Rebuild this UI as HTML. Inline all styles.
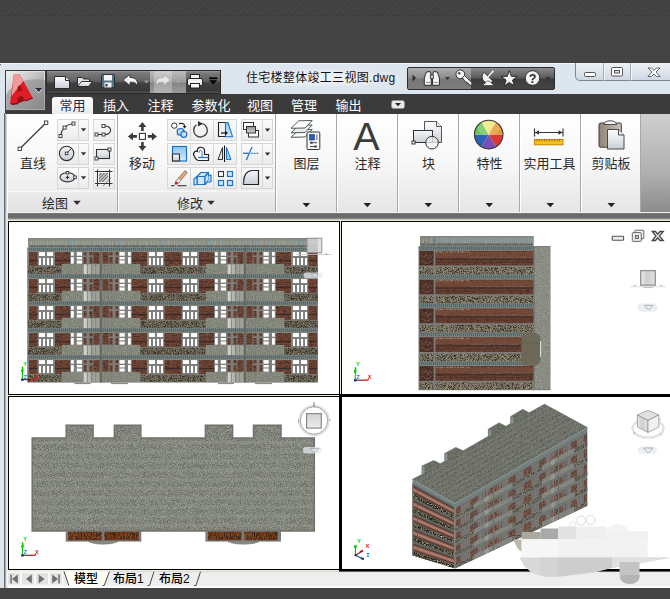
<!DOCTYPE html>
<html lang="zh-CN">
<head>
<meta charset="utf-8">
<title>住宅楼整体竣工三视图.dwg</title>
<style>
html,body{margin:0;padding:0;}
body{width:670px;height:599px;overflow:hidden;background:#444444;position:relative;
 font-family:"Liberation Sans","Noto Sans CJK SC",sans-serif;font-size:12px;color:#222;}
.abs{position:absolute;}
#topstrip{left:0;top:0;width:670px;height:16px;background:linear-gradient(rgba(0,0,0,0) 0,rgba(0,0,0,0) 15px,rgba(0,0,0,0.06) 15px),repeating-linear-gradient(135deg,#404040 0 2px,#444444 2px 4px);}
#win{left:0;top:63px;width:680px;height:525px;background:#dde5ee;border-top-left-radius:4px;}
#winhi{left:0;top:63px;width:670px;height:1px;background:#f4f7fa;}
/* title area */
#abtn{left:6px;top:70px;width:39px;height:41px;background:linear-gradient(135deg,#f0f0f0 0%,#bdbdbd 45%,#8e8e8e 100%);border:1px solid #555;box-sizing:border-box;}
#qat{left:46px;top:70px;width:175px;height:24px;background:linear-gradient(#9a9a9a 0,#7a7a7a 8%,#626262 45%,#404040 55%,#383838 88%,#505050 100%);border:1px solid #2a2a2a;box-sizing:border-box;}
#qatredo{left:150px;top:71px;width:36px;height:22px;background:linear-gradient(90deg,rgba(255,255,255,0) 0,rgba(255,255,255,0) 4px,rgba(255,255,255,0.25) 4px,rgba(255,255,255,0.25) 22px,rgba(255,255,255,0) 22px),linear-gradient(#bcbcbc,#9c9c9c 48%,#868686 55%,#9a9a9a);}
#title{left:240px;top:69px;width:166px;height:18px;line-height:18px;font-size:12px;color:#111;white-space:nowrap;letter-spacing:0.3px;padding-left:6px;box-sizing:border-box;background:radial-gradient(ellipse at center,rgba(255,255,255,0.55) 0%,rgba(255,255,255,0.3) 50%,rgba(255,255,255,0) 75%);}
#info{left:407px;top:67px;width:148px;height:23px;background:linear-gradient(90deg,rgba(255,255,255,0.30) 0,rgba(255,255,255,0.30) 63px,rgba(255,255,255,0) 63px),linear-gradient(#8a8a8a 0%,#5c5c5c 45%,#3c3c3c 55%,#454545 100%);border:1px solid #2c2c2c;box-sizing:border-box;border-radius:2px;}
#wctl{left:575px;top:63px;width:101px;height:18px;background:linear-gradient(#eef2f7,#cfd8e3);border:1px solid #7d8794;border-top:none;box-sizing:border-box;border-bottom-left-radius:5px;}
#tabrow{left:5px;top:94px;width:665px;height:20px;background:#3b3b3b;}
.tab{position:absolute;top:97px;height:17px;line-height:17px;font-size:13px;color:#fff;white-space:nowrap;}
#tabact{left:52px;top:97px;width:41px;height:17px;background:linear-gradient(#fdfdfd,#ececec);border-radius:3px 3px 0 0;}
/* ribbon */
#ribbon{left:5px;top:114px;width:665px;height:99px;background:linear-gradient(90deg,#d2d2d2 0,#d2d2d2 640px,#bcbcbc 665px);}
#ribgray{left:641px;top:114px;width:29px;height:98px;background:linear-gradient(#cfcfcf,#b0b0b0 60%,#8c8c8c);}
.panel{position:absolute;top:114px;height:98px;background:linear-gradient(#ffffff 0%,#f7f7f7 50%,#e6e6e6 100%);border-right:1px solid #a8a8a8;border-left:1px solid #fff;box-sizing:border-box;}
.ptitle{position:absolute;left:0;right:0;bottom:0;height:20px;background:linear-gradient(#ececec,#e2e2e2);border-top:1px solid #f8f8f8;}
.plabel{position:absolute;font-size:13px;color:#2a2a2a;white-space:nowrap;text-align:center;line-height:14px;}
.sb{position:absolute;height:22px;background:linear-gradient(#fbfbfb,#ededed);border:1px solid #dcdcdc;box-sizing:border-box;}
.dd{position:absolute;width:0;height:0;border-left:4px solid transparent;border-right:4px solid transparent;border-top:4px solid #333;}
.dds{position:absolute;width:0;height:0;border-left:3px solid transparent;border-right:3px solid transparent;border-top:3px solid #333;}
#band1{left:5px;top:212px;width:665px;height:8px;background:linear-gradient(#f0f0f0 0,#f0f0f0 1px,#7e7e7e 1px,#6c6c6c 2.5px,#6c6c6c 6px,#8a8a8a 6px,#8a8a8a 7px,#bdbdbd 7px,#bdbdbd 8px);}
#band2{left:5px;top:220px;width:665px;height:1px;background:#dcdacc;}
/* viewports */
#vparea{left:8px;top:220px;width:662px;height:351px;background:#f0eedd;}
.vpb{position:absolute;background:#fff;border:1px solid #000;box-sizing:border-box;}
.vp{position:absolute;background:#fff;}
#bottombar{left:5px;top:571px;width:665px;height:17px;background:linear-gradient(#eeeeee 0,#eeeeee 15px,#fbfbfb 15px);}
#below{left:0;top:588px;width:670px;height:11px;background:#444;}
#lframe{left:4px;top:113px;width:2px;height:475px;background:linear-gradient(90deg,#6b6b6b 0,#6b6b6b 1px,#a9a9a9 1px);}
#lframe2{left:6px;top:213px;width:2px;height:375px;background:#e6e6e6;}
.btab{position:absolute;top:572px;height:15px;line-height:15px;font-size:12px;color:#000;white-space:nowrap;font-family:"Liberation Sans","Noto Sans CJK SC",sans-serif;font-weight:500;}
</style>
</head>
<body>
<div class="abs" id="topstrip"></div>
<div class="abs" id="win"></div>
<div class="abs" id="winhi"></div>

<div class="abs" id="qat"></div>
<div class="abs" id="qatredo"></div>
<div class="abs" id="title">住宅楼整体竣工三视图.dwg</div>
<div class="abs" id="info"></div>
<div class="abs" id="wctl"></div>

<div class="abs" id="tabrow"></div>
<div class="abs" id="tabact"></div>
<div class="tab" style="left:59.500px;color:#1a2a55;">常用</div>
<div class="tab" style="left:103px;">插入</div>
<div class="tab" style="left:147.500px;">注释</div>
<div class="tab" style="left:191.500px;">参数化</div>
<div class="tab" style="left:247px;">视图</div>
<div class="tab" style="left:291px;">管理</div>
<div class="tab" style="left:335.500px;">输出</div>

<div class="abs" id="ribbon"></div>
<div class="abs" id="ribgray"></div>
<!-- PANELS -->
<div class="panel" id="p-draw" style="left:7px;width:111px;"><div class="ptitle"></div></div>
<div class="panel" id="p-mod" style="left:118px;width:158px;"><div class="ptitle"></div></div>
<div class="panel" id="p-layer" style="left:276px;width:61px;"></div>
<div class="panel" id="p-anno" style="left:337px;width:61px;"></div>
<div class="panel" id="p-block" style="left:398px;width:61px;"></div>
<div class="panel" id="p-prop" style="left:459px;width:61px;"></div>
<div class="panel" id="p-util" style="left:520px;width:61px;"></div>
<div class="panel" id="p-clip" style="left:581px;width:60px;"></div>

<div class="plabel" style="left:19px;top:157px;width:28px;">直线</div>
<div class="plabel" style="left:128px;top:157px;width:28px;">移动</div>
<div class="plabel" style="left:41px;top:197px;width:28px;">绘图</div>
<div class="plabel" style="left:176px;top:197px;width:28px;">修改</div>
<div class="plabel" style="left:276px;top:157px;width:61px;">图层</div>
<div class="plabel" style="left:337px;top:157px;width:61px;">注释</div>
<div class="plabel" style="left:398px;top:157px;width:61px;">块</div>
<div class="plabel" style="left:459px;top:157px;width:61px;">特性</div>
<div class="plabel" style="left:519px;top:157px;width:61px;">实用工具</div>
<div class="plabel" style="left:581px;top:157px;width:60px;">剪贴板</div>

<div class="abs" id="band1"></div>
<div class="abs" id="band2"></div>

<div class="abs" id="bottombar"></div>
<div class="abs" id="lframe"></div>
<div class="abs" id="lframe2"></div>
<div class="abs" id="below"></div>
<div class="abs" id="vparea"></div>
<div class="vpb" id="vp1" style="left:8px;top:221px;width:332px;height:174px;"></div>
<div class="vpb" id="vp2" style="left:341px;top:221px;width:335px;height:175px;"></div>
<div class="vpb" id="vp3" style="left:8px;top:396px;width:333px;height:174px;"></div>
<div class="vpb" id="vp4" style="left:339px;top:394px;width:340px;height:178px;border:3px solid #000;"></div>
<!--VPCONTENT-->
<svg class="abs" id="chrome" style="left:0;top:0;" width="670" height="599" viewBox="0 0 670 599">
<defs>
<linearGradient id="gw" x1="0" y1="0" x2="0" y2="1"><stop offset="0" stop-color="#ffffff"/><stop offset="1" stop-color="#c9ced6"/></linearGradient>
<linearGradient id="gA" x1="0" y1="0" x2="1" y2="1"><stop offset="0" stop-color="#f4f4f4"/><stop offset="0.45" stop-color="#c2c2c2"/><stop offset="1" stop-color="#808080"/></linearGradient>
</defs>
<!--GEN_VP1START--><defs><filter id="fstone" x="0" y="0" width="100%" height="100%" color-interpolation-filters="sRGB"><feTurbulence type="fractalNoise" baseFrequency="1.4" numOctaves="2" seed="3" result="n"/><feColorMatrix in="n" type="matrix" values="0 0 0 0 0  0 0 0 0 0  0 0 0 0 0  2.3 2.3 0 0 -2.0" result="a"/><feFlood flood-color="#2f2b22"/><feComposite in2="a" operator="in" result="d0"/><feComposite in="d0" in2="SourceAlpha" operator="in" result="dark"/><feColorMatrix in="n" type="matrix" values="0 0 0 0 0  0 0 0 0 0  0 0 0 0 0  0 -2.3 -2.3 0 1.72" result="b"/><feFlood flood-color="#b4ae98"/><feComposite in2="b" operator="in" result="l0"/><feComposite in="l0" in2="SourceAlpha" operator="in" result="light"/><feMerge><feMergeNode in="SourceGraphic"/><feMergeNode in="dark"/><feMergeNode in="light"/></feMerge></filter><filter id="fconc" x="0" y="0" width="100%" height="100%" color-interpolation-filters="sRGB"><feTurbulence type="fractalNoise" baseFrequency="1.2" numOctaves="2" seed="8" result="n"/><feColorMatrix in="n" type="matrix" values="1 0 0 0 0  1 0 0 0 0  1 0 0 0 0  0 0 0 0 1" result="g"/><feComposite in="SourceGraphic" in2="g" operator="arithmetic" k1="0" k2="1" k3="0.24" k4="-0.12" result="c"/><feComposite in="c" in2="SourceAlpha" operator="in"/></filter><filter id="fbrick" x="0" y="0" width="100%" height="100%" color-interpolation-filters="sRGB"><feTurbulence type="fractalNoise" baseFrequency="0.3 0.9" numOctaves="2" seed="11" result="n"/><feColorMatrix in="n" type="matrix" values="0 0 0 0 0  0 0 0 0 0  0 0 0 0 0  2.4 2.4 0 0 -2.25" result="a"/><feFlood flood-color="#46302a"/><feComposite in2="a" operator="in" result="d0"/><feComposite in="d0" in2="SourceAlpha" operator="in" result="dark"/><feColorMatrix in="n" type="matrix" values="0 0 0 0 0  0 0 0 0 0  0 0 0 0 0  0 -2.4 -2.4 0 1.78" result="b"/><feFlood flood-color="#8a6450"/><feComposite in2="b" operator="in" result="l0"/><feComposite in="l0" in2="SourceAlpha" operator="in" result="light"/><feMerge><feMergeNode in="SourceGraphic"/><feMergeNode in="dark"/><feMergeNode in="light"/></feMerge></filter><filter id="froof" x="0" y="0" width="100%" height="100%" color-interpolation-filters="sRGB"><feTurbulence type="fractalNoise" baseFrequency="1.3" numOctaves="2" seed="5" result="n"/><feColorMatrix in="n" type="matrix" values="1 0 0 0 0  1 0 0 0 0  1 0 0 0 0  0 0 0 0 1" result="g"/><feComposite in="SourceGraphic" in2="g" operator="arithmetic" k1="0" k2="1" k3="0.42" k4="-0.21" result="c"/><feComposite in="c" in2="SourceAlpha" operator="in"/></filter><filter id="froof2" x="0" y="0" width="100%" height="100%" color-interpolation-filters="sRGB"><feTurbulence type="fractalNoise" baseFrequency="1.2" numOctaves="2" seed="15" result="n"/><feColorMatrix in="n" type="matrix" values="1 0 0 0 0  1 0 0 0 0  1 0 0 0 0  0 0 0 0 1" result="g"/><feComposite in="SourceGraphic" in2="g" operator="arithmetic" k1="0" k2="1" k3="0.3" k4="-0.15" result="c"/><feComposite in="c" in2="SourceAlpha" operator="in"/></filter><filter id="fbrick2" x="0" y="0" width="100%" height="100%" color-interpolation-filters="sRGB"><feTurbulence type="fractalNoise" baseFrequency="0.9" numOctaves="2" seed="31" result="n"/><feColorMatrix in="n" type="matrix" values="0 0 0 0 0  0 0 0 0 0  0 0 0 0 0  2.8 2.8 0 0 -2.4" result="a"/><feFlood flood-color="#3a2a24"/><feComposite in2="a" operator="in" result="d0"/><feComposite in="d0" in2="SourceAlpha" operator="in" result="dark"/><feColorMatrix in="n" type="matrix" values="0 0 0 0 0  0 0 0 0 0  0 0 0 0 0  0 -2.8 -2.8 0 1.95" result="b"/><feFlood flood-color="#ad7c66"/><feComposite in2="b" operator="in" result="l0"/><feComposite in="l0" in2="SourceAlpha" operator="in" result="light"/><feMerge><feMergeNode in="SourceGraphic"/><feMergeNode in="dark"/><feMergeNode in="light"/></feMerge></filter><filter id="fstone2" x="0" y="0" width="100%" height="100%" color-interpolation-filters="sRGB"><feTurbulence type="fractalNoise" baseFrequency="1.1" numOctaves="2" seed="33" result="n"/><feColorMatrix in="n" type="matrix" values="0 0 0 0 0  0 0 0 0 0  0 0 0 0 0  2.8 2.8 0 0 -2.4" result="a"/><feFlood flood-color="#2f2b22"/><feComposite in2="a" operator="in" result="d0"/><feComposite in="d0" in2="SourceAlpha" operator="in" result="dark"/><feColorMatrix in="n" type="matrix" values="0 0 0 0 0  0 0 0 0 0  0 0 0 0 0  0 -2.8 -2.8 0 2.1" result="b"/><feFlood flood-color="#c8c2ac"/><feComposite in2="b" operator="in" result="l0"/><feComposite in="l0" in2="SourceAlpha" operator="in" result="light"/><feMerge><feMergeNode in="SourceGraphic"/><feMergeNode in="dark"/><feMergeNode in="light"/></feMerge></filter><filter id="fstone3" x="0" y="0" width="100%" height="100%" color-interpolation-filters="sRGB"><feTurbulence type="fractalNoise" baseFrequency="1.2 0.9" numOctaves="2" seed="35" result="n"/><feColorMatrix in="n" type="matrix" values="0 0 0 0 0  0 0 0 0 0  0 0 0 0 0  3.2 3.2 0 0 -2.6" result="a"/><feFlood flood-color="#1e1c18"/><feComposite in2="a" operator="in" result="d0"/><feComposite in="d0" in2="SourceAlpha" operator="in" result="dark"/><feColorMatrix in="n" type="matrix" values="0 0 0 0 0  0 0 0 0 0  0 0 0 0 0  0 -3.2 -3.2 0 2.35" result="b"/><feFlood flood-color="#efe9d6"/><feComposite in2="b" operator="in" result="l0"/><feComposite in="l0" in2="SourceAlpha" operator="in" result="light"/><feMerge><feMergeNode in="SourceGraphic"/><feMergeNode in="dark"/><feMergeNode in="light"/></feMerge></filter><filter id="fwood" x="0" y="0" width="100%" height="100%" color-interpolation-filters="sRGB"><feTurbulence type="fractalNoise" baseFrequency="1.1 0.3" numOctaves="2" seed="21" result="n"/><feColorMatrix in="n" type="matrix" values="0 0 0 0 0  0 0 0 0 0  0 0 0 0 0  2.6 2.6 0 0 -2.25" result="a"/><feFlood flood-color="#3a2214"/><feComposite in2="a" operator="in" result="d0"/><feComposite in="d0" in2="SourceAlpha" operator="in" result="dark"/><feColorMatrix in="n" type="matrix" values="0 0 0 0 0  0 0 0 0 0  0 0 0 0 0  0 -2.4 -2.4 0 1.75" result="b"/><feFlood flood-color="#9c5c2e"/><feComposite in2="b" operator="in" result="l0"/><feComposite in="l0" in2="SourceAlpha" operator="in" result="light"/><feMerge><feMergeNode in="SourceGraphic"/><feMergeNode in="dark"/><feMergeNode in="light"/></feMerge></filter><pattern id="pband" width="2" height="3.3" patternUnits="userSpaceOnUse"><rect width="2" height="3.3" fill="#5c635d"/><rect x="0" y="0.6" width="1" height="2.7" fill="#6f8385"/><rect y="0" width="2" height="0.6" fill="#6c6f6a"/></pattern>
<pattern id="pparapet" width="23" height="8" patternUnits="userSpaceOnUse"><rect width="23" height="8" fill="#8b8e83"/><rect x="1" y="1" width="0.9" height="6" fill="#8aa9ab"/><rect x="3.2" y="1" width="0.9" height="6" fill="#8aa9ab"/><rect x="5.4" y="1" width="0.9" height="6" fill="#90abab"/><rect x="7.6" y="1" width="1" height="6" fill="#aeaf9c"/><rect x="10.2" y="1" width="0.8" height="6" fill="#97a29c"/><rect x="13" y="1" width="1" height="6" fill="#a3a595"/><rect x="15.400" y="1" width="0.9" height="6" fill="#8aa9ab"/><rect x="17.600" y="1" width="0.9" height="6" fill="#8ea8a8"/><rect x="20" y="1" width="1" height="6" fill="#a0a292"/></pattern>
<pattern id="pparapet2" width="2.2" height="6" patternUnits="userSpaceOnUse"><rect width="2.2" height="6" fill="#868b84"/><rect x="0.3" width="0.8" height="6" fill="#8fa9aa"/></pattern>
</defs><g id="vp1c"><rect x="28.30" y="238.20" width="289.50" height="7.00" fill="url(#pparapet)"/><rect x="28.30" y="238.20" width="289.50" height="0.90" fill="#787a74"/><rect x="28.30" y="238.20" width="0.90" height="7.00" fill="#787a74"/><rect x="28.30" y="245.00" width="289.50" height="2.60" fill="#7c7d79"/><path d="M30 246.200 H316" stroke="#55554f" stroke-width="0.9" stroke-dasharray="5 1.500 2 1 7 2"/><rect x="27.20" y="247.40" width="290.80" height="135.20" fill="#7e7e7c"/><g fill="url(#pband)"><rect x="29.00" y="247.60" width="144.00" height="3.30"/><rect x="29.00" y="274.60" width="144.00" height="3.30"/><rect x="29.00" y="301.60" width="144.00" height="3.30"/><rect x="29.00" y="328.60" width="144.00" height="3.30"/><rect x="29.00" y="355.60" width="144.00" height="3.30"/><rect x="173.00" y="247.60" width="144.00" height="3.30"/><rect x="173.00" y="274.60" width="144.00" height="3.30"/><rect x="173.00" y="301.60" width="144.00" height="3.30"/><rect x="173.00" y="328.60" width="144.00" height="3.30"/><rect x="173.00" y="355.60" width="144.00" height="3.30"/></g><g fill="#85877a"><rect x="29.00" y="250.90" width="144.00" height="0.90"/><rect x="29.00" y="277.90" width="144.00" height="0.90"/><rect x="29.00" y="304.90" width="144.00" height="0.90"/><rect x="29.00" y="331.90" width="144.00" height="0.90"/><rect x="29.00" y="358.90" width="144.00" height="0.90"/><rect x="173.00" y="250.90" width="144.00" height="0.90"/><rect x="173.00" y="277.90" width="144.00" height="0.90"/><rect x="173.00" y="304.90" width="144.00" height="0.90"/><rect x="173.00" y="331.90" width="144.00" height="0.90"/><rect x="173.00" y="358.90" width="144.00" height="0.90"/></g><g fill="#6f4433" filter="url(#fbrick)"><rect x="29.00" y="252.10" width="8.50" height="13.80"/><rect x="55.00" y="252.10" width="15.00" height="13.80"/><rect x="93.50" y="252.10" width="6.00" height="11.50"/><rect x="89.50" y="252.10" width="3.00" height="3.20"/><rect x="89.50" y="257.10" width="3.00" height="6.50"/><rect x="83.70" y="252.10" width="2.80" height="3.20"/><rect x="83.70" y="257.10" width="2.80" height="6.50"/><rect x="164.50" y="252.10" width="8.50" height="13.80"/><rect x="132.00" y="252.10" width="15.00" height="13.80"/><rect x="102.50" y="252.10" width="6.00" height="11.50"/><rect x="109.50" y="252.10" width="3.00" height="3.20"/><rect x="109.50" y="257.10" width="3.00" height="6.50"/><rect x="115.50" y="252.10" width="2.80" height="3.20"/><rect x="115.50" y="257.10" width="2.80" height="6.50"/><rect x="29.00" y="279.10" width="8.50" height="13.80"/><rect x="55.00" y="279.10" width="15.00" height="13.80"/><rect x="93.50" y="279.10" width="6.00" height="11.50"/><rect x="89.50" y="279.10" width="3.00" height="3.20"/><rect x="89.50" y="284.10" width="3.00" height="6.50"/><rect x="83.70" y="279.10" width="2.80" height="3.20"/><rect x="83.70" y="284.10" width="2.80" height="6.50"/><rect x="164.50" y="279.10" width="8.50" height="13.80"/><rect x="132.00" y="279.10" width="15.00" height="13.80"/><rect x="102.50" y="279.10" width="6.00" height="11.50"/><rect x="109.50" y="279.10" width="3.00" height="3.20"/><rect x="109.50" y="284.10" width="3.00" height="6.50"/><rect x="115.50" y="279.10" width="2.80" height="3.20"/><rect x="115.50" y="284.10" width="2.80" height="6.50"/><rect x="29.00" y="306.10" width="8.50" height="13.80"/><rect x="55.00" y="306.10" width="15.00" height="13.80"/><rect x="93.50" y="306.10" width="6.00" height="11.50"/><rect x="89.50" y="306.10" width="3.00" height="3.20"/><rect x="89.50" y="311.10" width="3.00" height="6.50"/><rect x="83.70" y="306.10" width="2.80" height="3.20"/><rect x="83.70" y="311.10" width="2.80" height="6.50"/><rect x="164.50" y="306.10" width="8.50" height="13.80"/><rect x="132.00" y="306.10" width="15.00" height="13.80"/><rect x="102.50" y="306.10" width="6.00" height="11.50"/><rect x="109.50" y="306.10" width="3.00" height="3.20"/><rect x="109.50" y="311.10" width="3.00" height="6.50"/><rect x="115.50" y="306.10" width="2.80" height="3.20"/><rect x="115.50" y="311.10" width="2.80" height="6.50"/><rect x="29.00" y="333.10" width="8.50" height="13.80"/><rect x="55.00" y="333.10" width="15.00" height="13.80"/><rect x="93.50" y="333.10" width="6.00" height="11.50"/><rect x="89.50" y="333.10" width="3.00" height="3.20"/><rect x="89.50" y="338.10" width="3.00" height="6.50"/><rect x="83.70" y="333.10" width="2.80" height="3.20"/><rect x="83.70" y="338.10" width="2.80" height="6.50"/><rect x="164.50" y="333.10" width="8.50" height="13.80"/><rect x="132.00" y="333.10" width="15.00" height="13.80"/><rect x="102.50" y="333.10" width="6.00" height="11.50"/><rect x="109.50" y="333.10" width="3.00" height="3.20"/><rect x="109.50" y="338.10" width="3.00" height="6.50"/><rect x="115.50" y="333.10" width="2.80" height="3.20"/><rect x="115.50" y="338.10" width="2.80" height="6.50"/><rect x="29.00" y="360.10" width="8.50" height="13.80"/><rect x="55.00" y="360.10" width="15.00" height="13.80"/><rect x="93.50" y="360.10" width="6.00" height="11.50"/><rect x="89.50" y="360.10" width="3.00" height="3.20"/><rect x="89.50" y="365.10" width="3.00" height="6.50"/><rect x="83.70" y="360.10" width="2.80" height="3.20"/><rect x="83.70" y="365.10" width="2.80" height="6.50"/><rect x="164.50" y="360.10" width="8.50" height="13.80"/><rect x="132.00" y="360.10" width="15.00" height="13.80"/><rect x="102.50" y="360.10" width="6.00" height="11.50"/><rect x="109.50" y="360.10" width="3.00" height="3.20"/><rect x="109.50" y="365.10" width="3.00" height="6.50"/><rect x="115.50" y="360.10" width="2.80" height="3.20"/><rect x="115.50" y="365.10" width="2.80" height="6.50"/><rect x="173.00" y="252.10" width="8.50" height="13.80"/><rect x="199.00" y="252.10" width="15.00" height="13.80"/><rect x="237.50" y="252.10" width="6.00" height="11.50"/><rect x="233.50" y="252.10" width="3.00" height="3.20"/><rect x="233.50" y="257.10" width="3.00" height="6.50"/><rect x="227.70" y="252.10" width="2.80" height="3.20"/><rect x="227.70" y="257.10" width="2.80" height="6.50"/><rect x="308.50" y="252.10" width="8.50" height="13.80"/><rect x="276.00" y="252.10" width="15.00" height="13.80"/><rect x="246.50" y="252.10" width="6.00" height="11.50"/><rect x="253.50" y="252.10" width="3.00" height="3.20"/><rect x="253.50" y="257.10" width="3.00" height="6.50"/><rect x="259.50" y="252.10" width="2.80" height="3.20"/><rect x="259.50" y="257.10" width="2.80" height="6.50"/><rect x="173.00" y="279.10" width="8.50" height="13.80"/><rect x="199.00" y="279.10" width="15.00" height="13.80"/><rect x="237.50" y="279.10" width="6.00" height="11.50"/><rect x="233.50" y="279.10" width="3.00" height="3.20"/><rect x="233.50" y="284.10" width="3.00" height="6.50"/><rect x="227.70" y="279.10" width="2.80" height="3.20"/><rect x="227.70" y="284.10" width="2.80" height="6.50"/><rect x="308.50" y="279.10" width="8.50" height="13.80"/><rect x="276.00" y="279.10" width="15.00" height="13.80"/><rect x="246.50" y="279.10" width="6.00" height="11.50"/><rect x="253.50" y="279.10" width="3.00" height="3.20"/><rect x="253.50" y="284.10" width="3.00" height="6.50"/><rect x="259.50" y="279.10" width="2.80" height="3.20"/><rect x="259.50" y="284.10" width="2.80" height="6.50"/><rect x="173.00" y="306.10" width="8.50" height="13.80"/><rect x="199.00" y="306.10" width="15.00" height="13.80"/><rect x="237.50" y="306.10" width="6.00" height="11.50"/><rect x="233.50" y="306.10" width="3.00" height="3.20"/><rect x="233.50" y="311.10" width="3.00" height="6.50"/><rect x="227.70" y="306.10" width="2.80" height="3.20"/><rect x="227.70" y="311.10" width="2.80" height="6.50"/><rect x="308.50" y="306.10" width="8.50" height="13.80"/><rect x="276.00" y="306.10" width="15.00" height="13.80"/><rect x="246.50" y="306.10" width="6.00" height="11.50"/><rect x="253.50" y="306.10" width="3.00" height="3.20"/><rect x="253.50" y="311.10" width="3.00" height="6.50"/><rect x="259.50" y="306.10" width="2.80" height="3.20"/><rect x="259.50" y="311.10" width="2.80" height="6.50"/><rect x="173.00" y="333.10" width="8.50" height="13.80"/><rect x="199.00" y="333.10" width="15.00" height="13.80"/><rect x="237.50" y="333.10" width="6.00" height="11.50"/><rect x="233.50" y="333.10" width="3.00" height="3.20"/><rect x="233.50" y="338.10" width="3.00" height="6.50"/><rect x="227.70" y="333.10" width="2.80" height="3.20"/><rect x="227.70" y="338.10" width="2.80" height="6.50"/><rect x="308.50" y="333.10" width="8.50" height="13.80"/><rect x="276.00" y="333.10" width="15.00" height="13.80"/><rect x="246.50" y="333.10" width="6.00" height="11.50"/><rect x="253.50" y="333.10" width="3.00" height="3.20"/><rect x="253.50" y="338.10" width="3.00" height="6.50"/><rect x="259.50" y="333.10" width="2.80" height="3.20"/><rect x="259.50" y="338.10" width="2.80" height="6.50"/><rect x="173.00" y="360.10" width="8.50" height="13.80"/><rect x="199.00" y="360.10" width="15.00" height="13.80"/><rect x="237.50" y="360.10" width="6.00" height="11.50"/><rect x="233.50" y="360.10" width="3.00" height="3.20"/><rect x="233.50" y="365.10" width="3.00" height="6.50"/><rect x="227.70" y="360.10" width="2.80" height="3.20"/><rect x="227.70" y="365.10" width="2.80" height="6.50"/><rect x="308.50" y="360.10" width="8.50" height="13.80"/><rect x="276.00" y="360.10" width="15.00" height="13.80"/><rect x="246.50" y="360.10" width="6.00" height="11.50"/><rect x="253.50" y="360.10" width="3.00" height="3.20"/><rect x="253.50" y="365.10" width="3.00" height="6.50"/><rect x="259.50" y="360.10" width="2.80" height="3.20"/><rect x="259.50" y="365.10" width="2.80" height="6.50"/></g><g fill="#35292a" fill-opacity="0.9"><rect x="29.00" y="259.90" width="8.50" height="1.30"/><rect x="55.00" y="259.90" width="15.00" height="1.30"/><rect x="164.50" y="259.90" width="8.50" height="1.30"/><rect x="132.00" y="259.90" width="15.00" height="1.30"/><rect x="29.00" y="286.90" width="8.50" height="1.30"/><rect x="55.00" y="286.90" width="15.00" height="1.30"/><rect x="164.50" y="286.90" width="8.50" height="1.30"/><rect x="132.00" y="286.90" width="15.00" height="1.30"/><rect x="29.00" y="313.90" width="8.50" height="1.30"/><rect x="55.00" y="313.90" width="15.00" height="1.30"/><rect x="164.50" y="313.90" width="8.50" height="1.30"/><rect x="132.00" y="313.90" width="15.00" height="1.30"/><rect x="29.00" y="340.90" width="8.50" height="1.30"/><rect x="55.00" y="340.90" width="15.00" height="1.30"/><rect x="164.50" y="340.90" width="8.50" height="1.30"/><rect x="132.00" y="340.90" width="15.00" height="1.30"/><rect x="29.00" y="367.90" width="8.50" height="1.30"/><rect x="55.00" y="367.90" width="15.00" height="1.30"/><rect x="164.50" y="367.90" width="8.50" height="1.30"/><rect x="132.00" y="367.90" width="15.00" height="1.30"/><rect x="173.00" y="259.90" width="8.50" height="1.30"/><rect x="199.00" y="259.90" width="15.00" height="1.30"/><rect x="308.50" y="259.90" width="8.50" height="1.30"/><rect x="276.00" y="259.90" width="15.00" height="1.30"/><rect x="173.00" y="286.90" width="8.50" height="1.30"/><rect x="199.00" y="286.90" width="15.00" height="1.30"/><rect x="308.50" y="286.90" width="8.50" height="1.30"/><rect x="276.00" y="286.90" width="15.00" height="1.30"/><rect x="173.00" y="313.90" width="8.50" height="1.30"/><rect x="199.00" y="313.90" width="15.00" height="1.30"/><rect x="308.50" y="313.90" width="8.50" height="1.30"/><rect x="276.00" y="313.90" width="15.00" height="1.30"/><rect x="173.00" y="340.90" width="8.50" height="1.30"/><rect x="199.00" y="340.90" width="15.00" height="1.30"/><rect x="308.50" y="340.90" width="8.50" height="1.30"/><rect x="276.00" y="340.90" width="15.00" height="1.30"/><rect x="173.00" y="367.90" width="8.50" height="1.30"/><rect x="199.00" y="367.90" width="15.00" height="1.30"/><rect x="308.50" y="367.90" width="8.50" height="1.30"/><rect x="276.00" y="367.90" width="15.00" height="1.30"/></g><g fill="#777160" filter="url(#fstone)"><rect x="28.00" y="266.70" width="33.50" height="7.10"/><rect x="140.50" y="266.70" width="32.50" height="7.10"/><rect x="28.00" y="293.70" width="33.50" height="7.10"/><rect x="140.50" y="293.70" width="32.50" height="7.10"/><rect x="28.00" y="320.70" width="33.50" height="7.10"/><rect x="140.50" y="320.70" width="32.50" height="7.10"/><rect x="28.00" y="347.70" width="33.50" height="7.10"/><rect x="140.50" y="347.70" width="32.50" height="7.10"/><rect x="28.00" y="374.70" width="33.50" height="7.10"/><rect x="140.50" y="374.70" width="32.50" height="7.10"/><rect x="173.00" y="266.70" width="32.50" height="7.10"/><rect x="284.50" y="266.70" width="33.30" height="7.10"/><rect x="173.00" y="293.70" width="32.50" height="7.10"/><rect x="284.50" y="293.70" width="33.30" height="7.10"/><rect x="173.00" y="320.70" width="32.50" height="7.10"/><rect x="284.50" y="320.70" width="33.30" height="7.10"/><rect x="173.00" y="347.70" width="32.50" height="7.10"/><rect x="284.50" y="347.70" width="33.30" height="7.10"/><rect x="173.00" y="374.70" width="32.50" height="7.10"/><rect x="284.50" y="374.70" width="33.30" height="7.10"/></g><g fill="#84887c" filter="url(#fconc)"><rect x="61.50" y="263.60" width="38.70" height="10.50"/><rect x="101.80" y="263.60" width="38.70" height="10.50"/><rect x="61.50" y="290.60" width="38.70" height="10.50"/><rect x="101.80" y="290.60" width="38.70" height="10.50"/><rect x="61.50" y="317.60" width="38.70" height="10.50"/><rect x="101.80" y="317.60" width="38.70" height="10.50"/><rect x="61.50" y="344.60" width="38.70" height="10.50"/><rect x="101.80" y="344.60" width="38.70" height="10.50"/><rect x="61.50" y="371.60" width="38.70" height="10.50"/><rect x="101.80" y="371.60" width="38.70" height="10.50"/><rect x="205.50" y="263.60" width="38.70" height="10.50"/><rect x="245.80" y="263.60" width="38.70" height="10.50"/><rect x="205.50" y="290.60" width="38.70" height="10.50"/><rect x="245.80" y="290.60" width="38.70" height="10.50"/><rect x="205.50" y="317.60" width="38.70" height="10.50"/><rect x="245.80" y="317.60" width="38.70" height="10.50"/><rect x="205.50" y="344.60" width="38.70" height="10.50"/><rect x="245.80" y="344.60" width="38.70" height="10.50"/><rect x="205.50" y="371.60" width="38.70" height="10.50"/><rect x="245.80" y="371.60" width="38.70" height="10.50"/></g><g fill="#fff"><rect x="38.90" y="252.10" width="6.10" height="3.90"/><rect x="47.00" y="252.10" width="6.10" height="3.90"/><rect x="38.90" y="258.00" width="2.10" height="7.00"/><rect x="43.00" y="258.00" width="2.10" height="7.00"/><rect x="47.00" y="258.00" width="2.10" height="7.00"/><rect x="51.00" y="258.00" width="2.10" height="7.00"/><rect x="71.00" y="252.10" width="2.80" height="3.60"/><rect x="71.00" y="257.10" width="2.80" height="6.60"/><rect x="76.80" y="252.10" width="5.20" height="3.60"/><rect x="76.80" y="257.00" width="5.20" height="2.40"/><rect x="76.80" y="260.50" width="5.20" height="3.10"/><rect x="148.90" y="252.10" width="6.10" height="3.90"/><rect x="157.00" y="252.10" width="6.10" height="3.90"/><rect x="148.90" y="258.00" width="2.10" height="7.00"/><rect x="153.00" y="258.00" width="2.10" height="7.00"/><rect x="157.00" y="258.00" width="2.10" height="7.00"/><rect x="161.00" y="258.00" width="2.10" height="7.00"/><rect x="128.00" y="252.10" width="2.80" height="3.60"/><rect x="128.00" y="257.10" width="2.80" height="6.60"/><rect x="119.50" y="252.10" width="5.20" height="3.60"/><rect x="119.50" y="257.00" width="5.20" height="2.40"/><rect x="119.50" y="260.50" width="5.20" height="3.10"/><rect x="38.90" y="279.10" width="6.10" height="3.90"/><rect x="47.00" y="279.10" width="6.10" height="3.90"/><rect x="38.90" y="285.00" width="2.10" height="7.00"/><rect x="43.00" y="285.00" width="2.10" height="7.00"/><rect x="47.00" y="285.00" width="2.10" height="7.00"/><rect x="51.00" y="285.00" width="2.10" height="7.00"/><rect x="71.00" y="279.10" width="2.80" height="3.60"/><rect x="71.00" y="284.10" width="2.80" height="6.60"/><rect x="76.80" y="279.10" width="5.20" height="3.60"/><rect x="76.80" y="284.00" width="5.20" height="2.40"/><rect x="76.80" y="287.50" width="5.20" height="3.10"/><rect x="148.90" y="279.10" width="6.10" height="3.90"/><rect x="157.00" y="279.10" width="6.10" height="3.90"/><rect x="148.90" y="285.00" width="2.10" height="7.00"/><rect x="153.00" y="285.00" width="2.10" height="7.00"/><rect x="157.00" y="285.00" width="2.10" height="7.00"/><rect x="161.00" y="285.00" width="2.10" height="7.00"/><rect x="128.00" y="279.10" width="2.80" height="3.60"/><rect x="128.00" y="284.10" width="2.80" height="6.60"/><rect x="119.50" y="279.10" width="5.20" height="3.60"/><rect x="119.50" y="284.00" width="5.20" height="2.40"/><rect x="119.50" y="287.50" width="5.20" height="3.10"/><rect x="38.90" y="306.10" width="6.10" height="3.90"/><rect x="47.00" y="306.10" width="6.10" height="3.90"/><rect x="38.90" y="312.00" width="2.10" height="7.00"/><rect x="43.00" y="312.00" width="2.10" height="7.00"/><rect x="47.00" y="312.00" width="2.10" height="7.00"/><rect x="51.00" y="312.00" width="2.10" height="7.00"/><rect x="71.00" y="306.10" width="2.80" height="3.60"/><rect x="71.00" y="311.10" width="2.80" height="6.60"/><rect x="76.80" y="306.10" width="5.20" height="3.60"/><rect x="76.80" y="311.00" width="5.20" height="2.40"/><rect x="76.80" y="314.50" width="5.20" height="3.10"/><rect x="148.90" y="306.10" width="6.10" height="3.90"/><rect x="157.00" y="306.10" width="6.10" height="3.90"/><rect x="148.90" y="312.00" width="2.10" height="7.00"/><rect x="153.00" y="312.00" width="2.10" height="7.00"/><rect x="157.00" y="312.00" width="2.10" height="7.00"/><rect x="161.00" y="312.00" width="2.10" height="7.00"/><rect x="128.00" y="306.10" width="2.80" height="3.60"/><rect x="128.00" y="311.10" width="2.80" height="6.60"/><rect x="119.50" y="306.10" width="5.20" height="3.60"/><rect x="119.50" y="311.00" width="5.20" height="2.40"/><rect x="119.50" y="314.50" width="5.20" height="3.10"/><rect x="38.90" y="333.10" width="6.10" height="3.90"/><rect x="47.00" y="333.10" width="6.10" height="3.90"/><rect x="38.90" y="339.00" width="2.10" height="7.00"/><rect x="43.00" y="339.00" width="2.10" height="7.00"/><rect x="47.00" y="339.00" width="2.10" height="7.00"/><rect x="51.00" y="339.00" width="2.10" height="7.00"/><rect x="71.00" y="333.10" width="2.80" height="3.60"/><rect x="71.00" y="338.10" width="2.80" height="6.60"/><rect x="76.80" y="333.10" width="5.20" height="3.60"/><rect x="76.80" y="338.00" width="5.20" height="2.40"/><rect x="76.80" y="341.50" width="5.20" height="3.10"/><rect x="148.90" y="333.10" width="6.10" height="3.90"/><rect x="157.00" y="333.10" width="6.10" height="3.90"/><rect x="148.90" y="339.00" width="2.10" height="7.00"/><rect x="153.00" y="339.00" width="2.10" height="7.00"/><rect x="157.00" y="339.00" width="2.10" height="7.00"/><rect x="161.00" y="339.00" width="2.10" height="7.00"/><rect x="128.00" y="333.10" width="2.80" height="3.60"/><rect x="128.00" y="338.10" width="2.80" height="6.60"/><rect x="119.50" y="333.10" width="5.20" height="3.60"/><rect x="119.50" y="338.00" width="5.20" height="2.40"/><rect x="119.50" y="341.50" width="5.20" height="3.10"/><rect x="38.90" y="360.10" width="6.10" height="3.90"/><rect x="47.00" y="360.10" width="6.10" height="3.90"/><rect x="38.90" y="366.00" width="2.10" height="7.00"/><rect x="43.00" y="366.00" width="2.10" height="7.00"/><rect x="47.00" y="366.00" width="2.10" height="7.00"/><rect x="51.00" y="366.00" width="2.10" height="7.00"/><rect x="71.00" y="360.10" width="2.80" height="3.60"/><rect x="71.00" y="365.10" width="2.80" height="6.60"/><rect x="76.80" y="360.10" width="5.20" height="3.60"/><rect x="76.80" y="365.00" width="5.20" height="2.40"/><rect x="76.80" y="368.50" width="5.20" height="3.10"/><rect x="148.90" y="360.10" width="6.10" height="3.90"/><rect x="157.00" y="360.10" width="6.10" height="3.90"/><rect x="148.90" y="366.00" width="2.10" height="7.00"/><rect x="153.00" y="366.00" width="2.10" height="7.00"/><rect x="157.00" y="366.00" width="2.10" height="7.00"/><rect x="161.00" y="366.00" width="2.10" height="7.00"/><rect x="128.00" y="360.10" width="2.80" height="3.60"/><rect x="128.00" y="365.10" width="2.80" height="6.60"/><rect x="119.50" y="360.10" width="5.20" height="3.60"/><rect x="119.50" y="365.00" width="5.20" height="2.40"/><rect x="119.50" y="368.50" width="5.20" height="3.10"/><rect x="182.90" y="252.10" width="6.10" height="3.90"/><rect x="191.00" y="252.10" width="6.10" height="3.90"/><rect x="182.90" y="258.00" width="2.10" height="7.00"/><rect x="187.00" y="258.00" width="2.10" height="7.00"/><rect x="191.00" y="258.00" width="2.10" height="7.00"/><rect x="195.00" y="258.00" width="2.10" height="7.00"/><rect x="215.00" y="252.10" width="2.80" height="3.60"/><rect x="215.00" y="257.10" width="2.80" height="6.60"/><rect x="220.80" y="252.10" width="5.20" height="3.60"/><rect x="220.80" y="257.00" width="5.20" height="2.40"/><rect x="220.80" y="260.50" width="5.20" height="3.10"/><rect x="292.90" y="252.10" width="6.10" height="3.90"/><rect x="301.00" y="252.10" width="6.10" height="3.90"/><rect x="292.90" y="258.00" width="2.10" height="7.00"/><rect x="297.00" y="258.00" width="2.10" height="7.00"/><rect x="301.00" y="258.00" width="2.10" height="7.00"/><rect x="305.00" y="258.00" width="2.10" height="7.00"/><rect x="272.00" y="252.10" width="2.80" height="3.60"/><rect x="272.00" y="257.10" width="2.80" height="6.60"/><rect x="263.50" y="252.10" width="5.20" height="3.60"/><rect x="263.50" y="257.00" width="5.20" height="2.40"/><rect x="263.50" y="260.50" width="5.20" height="3.10"/><rect x="182.90" y="279.10" width="6.10" height="3.90"/><rect x="191.00" y="279.10" width="6.10" height="3.90"/><rect x="182.90" y="285.00" width="2.10" height="7.00"/><rect x="187.00" y="285.00" width="2.10" height="7.00"/><rect x="191.00" y="285.00" width="2.10" height="7.00"/><rect x="195.00" y="285.00" width="2.10" height="7.00"/><rect x="215.00" y="279.10" width="2.80" height="3.60"/><rect x="215.00" y="284.10" width="2.80" height="6.60"/><rect x="220.80" y="279.10" width="5.20" height="3.60"/><rect x="220.80" y="284.00" width="5.20" height="2.40"/><rect x="220.80" y="287.50" width="5.20" height="3.10"/><rect x="292.90" y="279.10" width="6.10" height="3.90"/><rect x="301.00" y="279.10" width="6.10" height="3.90"/><rect x="292.90" y="285.00" width="2.10" height="7.00"/><rect x="297.00" y="285.00" width="2.10" height="7.00"/><rect x="301.00" y="285.00" width="2.10" height="7.00"/><rect x="305.00" y="285.00" width="2.10" height="7.00"/><rect x="272.00" y="279.10" width="2.80" height="3.60"/><rect x="272.00" y="284.10" width="2.80" height="6.60"/><rect x="263.50" y="279.10" width="5.20" height="3.60"/><rect x="263.50" y="284.00" width="5.20" height="2.40"/><rect x="263.50" y="287.50" width="5.20" height="3.10"/><rect x="182.90" y="306.10" width="6.10" height="3.90"/><rect x="191.00" y="306.10" width="6.10" height="3.90"/><rect x="182.90" y="312.00" width="2.10" height="7.00"/><rect x="187.00" y="312.00" width="2.10" height="7.00"/><rect x="191.00" y="312.00" width="2.10" height="7.00"/><rect x="195.00" y="312.00" width="2.10" height="7.00"/><rect x="215.00" y="306.10" width="2.80" height="3.60"/><rect x="215.00" y="311.10" width="2.80" height="6.60"/><rect x="220.80" y="306.10" width="5.20" height="3.60"/><rect x="220.80" y="311.00" width="5.20" height="2.40"/><rect x="220.80" y="314.50" width="5.20" height="3.10"/><rect x="292.90" y="306.10" width="6.10" height="3.90"/><rect x="301.00" y="306.10" width="6.10" height="3.90"/><rect x="292.90" y="312.00" width="2.10" height="7.00"/><rect x="297.00" y="312.00" width="2.10" height="7.00"/><rect x="301.00" y="312.00" width="2.10" height="7.00"/><rect x="305.00" y="312.00" width="2.10" height="7.00"/><rect x="272.00" y="306.10" width="2.80" height="3.60"/><rect x="272.00" y="311.10" width="2.80" height="6.60"/><rect x="263.50" y="306.10" width="5.20" height="3.60"/><rect x="263.50" y="311.00" width="5.20" height="2.40"/><rect x="263.50" y="314.50" width="5.20" height="3.10"/><rect x="182.90" y="333.10" width="6.10" height="3.90"/><rect x="191.00" y="333.10" width="6.10" height="3.90"/><rect x="182.90" y="339.00" width="2.10" height="7.00"/><rect x="187.00" y="339.00" width="2.10" height="7.00"/><rect x="191.00" y="339.00" width="2.10" height="7.00"/><rect x="195.00" y="339.00" width="2.10" height="7.00"/><rect x="215.00" y="333.10" width="2.80" height="3.60"/><rect x="215.00" y="338.10" width="2.80" height="6.60"/><rect x="220.80" y="333.10" width="5.20" height="3.60"/><rect x="220.80" y="338.00" width="5.20" height="2.40"/><rect x="220.80" y="341.50" width="5.20" height="3.10"/><rect x="292.90" y="333.10" width="6.10" height="3.90"/><rect x="301.00" y="333.10" width="6.10" height="3.90"/><rect x="292.90" y="339.00" width="2.10" height="7.00"/><rect x="297.00" y="339.00" width="2.10" height="7.00"/><rect x="301.00" y="339.00" width="2.10" height="7.00"/><rect x="305.00" y="339.00" width="2.10" height="7.00"/><rect x="272.00" y="333.10" width="2.80" height="3.60"/><rect x="272.00" y="338.10" width="2.80" height="6.60"/><rect x="263.50" y="333.10" width="5.20" height="3.60"/><rect x="263.50" y="338.00" width="5.20" height="2.40"/><rect x="263.50" y="341.50" width="5.20" height="3.10"/><rect x="182.90" y="360.10" width="6.10" height="3.90"/><rect x="191.00" y="360.10" width="6.10" height="3.90"/><rect x="182.90" y="366.00" width="2.10" height="7.00"/><rect x="187.00" y="366.00" width="2.10" height="7.00"/><rect x="191.00" y="366.00" width="2.10" height="7.00"/><rect x="195.00" y="366.00" width="2.10" height="7.00"/><rect x="215.00" y="360.10" width="2.80" height="3.60"/><rect x="215.00" y="365.10" width="2.80" height="6.60"/><rect x="220.80" y="360.10" width="5.20" height="3.60"/><rect x="220.80" y="365.00" width="5.20" height="2.40"/><rect x="220.80" y="368.50" width="5.20" height="3.10"/><rect x="292.90" y="360.10" width="6.10" height="3.90"/><rect x="301.00" y="360.10" width="6.10" height="3.90"/><rect x="292.90" y="366.00" width="2.10" height="7.00"/><rect x="297.00" y="366.00" width="2.10" height="7.00"/><rect x="301.00" y="366.00" width="2.10" height="7.00"/><rect x="305.00" y="366.00" width="2.10" height="7.00"/><rect x="272.00" y="360.10" width="2.80" height="3.60"/><rect x="272.00" y="365.10" width="2.80" height="6.60"/><rect x="263.50" y="360.10" width="5.20" height="3.60"/><rect x="263.50" y="365.00" width="5.20" height="2.40"/><rect x="263.50" y="368.50" width="5.20" height="3.10"/></g><g fill="#cfd0cb"><rect x="83.70" y="264.40" width="3.10" height="9.70"/><rect x="83.70" y="291.40" width="3.10" height="9.70"/><rect x="83.70" y="318.40" width="3.10" height="9.70"/><rect x="83.70" y="345.40" width="3.10" height="9.70"/><rect x="83.70" y="372.40" width="3.10" height="9.70"/><rect x="227.70" y="264.40" width="3.10" height="9.70"/><rect x="227.70" y="291.40" width="3.10" height="9.70"/><rect x="227.70" y="318.40" width="3.10" height="9.70"/><rect x="227.70" y="345.40" width="3.10" height="9.70"/><rect x="227.70" y="372.40" width="3.10" height="9.70"/></g><g fill="#b4b7b0"><rect x="87.80" y="264.40" width="3.10" height="9.70"/><rect x="87.80" y="291.40" width="3.10" height="9.70"/><rect x="87.80" y="318.40" width="3.10" height="9.70"/><rect x="87.80" y="345.40" width="3.10" height="9.70"/><rect x="87.80" y="372.40" width="3.10" height="9.70"/><rect x="231.80" y="264.40" width="3.10" height="9.70"/><rect x="231.80" y="291.40" width="3.10" height="9.70"/><rect x="231.80" y="318.40" width="3.10" height="9.70"/><rect x="231.80" y="345.40" width="3.10" height="9.70"/><rect x="231.80" y="372.40" width="3.10" height="9.70"/></g><g fill="#9fa29a"><rect x="92.40" y="264.40" width="2.80" height="9.70"/><rect x="96.20" y="264.40" width="3.00" height="9.70"/><rect x="92.40" y="291.40" width="2.80" height="9.70"/><rect x="96.20" y="291.40" width="3.00" height="9.70"/><rect x="92.40" y="318.40" width="2.80" height="9.70"/><rect x="96.20" y="318.40" width="3.00" height="9.70"/><rect x="92.40" y="345.40" width="2.80" height="9.70"/><rect x="96.20" y="345.40" width="3.00" height="9.70"/><rect x="92.40" y="372.40" width="2.80" height="9.70"/><rect x="96.20" y="372.40" width="3.00" height="9.70"/><rect x="236.40" y="264.40" width="2.80" height="9.70"/><rect x="240.20" y="264.40" width="3.00" height="9.70"/><rect x="236.40" y="291.40" width="2.80" height="9.70"/><rect x="240.20" y="291.40" width="3.00" height="9.70"/><rect x="236.40" y="318.40" width="2.80" height="9.70"/><rect x="240.20" y="318.40" width="3.00" height="9.70"/><rect x="236.40" y="345.40" width="2.80" height="9.70"/><rect x="240.20" y="345.40" width="3.00" height="9.70"/><rect x="236.40" y="372.40" width="2.80" height="9.70"/><rect x="240.20" y="372.40" width="3.00" height="9.70"/></g><g fill="#747870" fill-opacity="0.6"><rect x="104.00" y="264.40" width="0.80" height="9.70"/><rect x="107.50" y="264.40" width="0.80" height="9.70"/><rect x="111.00" y="264.40" width="0.80" height="9.70"/><rect x="104.00" y="291.40" width="0.80" height="9.70"/><rect x="107.50" y="291.40" width="0.80" height="9.70"/><rect x="111.00" y="291.40" width="0.80" height="9.70"/><rect x="104.00" y="318.40" width="0.80" height="9.70"/><rect x="107.50" y="318.40" width="0.80" height="9.70"/><rect x="111.00" y="318.40" width="0.80" height="9.70"/><rect x="104.00" y="345.40" width="0.80" height="9.70"/><rect x="107.50" y="345.40" width="0.80" height="9.70"/><rect x="111.00" y="345.40" width="0.80" height="9.70"/><rect x="104.00" y="372.40" width="0.80" height="9.70"/><rect x="107.50" y="372.40" width="0.80" height="9.70"/><rect x="111.00" y="372.40" width="0.80" height="9.70"/><rect x="248.00" y="264.40" width="0.80" height="9.70"/><rect x="251.50" y="264.40" width="0.80" height="9.70"/><rect x="255.00" y="264.40" width="0.80" height="9.70"/><rect x="248.00" y="291.40" width="0.80" height="9.70"/><rect x="251.50" y="291.40" width="0.80" height="9.70"/><rect x="255.00" y="291.40" width="0.80" height="9.70"/><rect x="248.00" y="318.40" width="0.80" height="9.70"/><rect x="251.50" y="318.40" width="0.80" height="9.70"/><rect x="255.00" y="318.40" width="0.80" height="9.70"/><rect x="248.00" y="345.40" width="0.80" height="9.70"/><rect x="251.50" y="345.40" width="0.80" height="9.70"/><rect x="255.00" y="345.40" width="0.80" height="9.70"/><rect x="248.00" y="372.40" width="0.80" height="9.70"/><rect x="251.50" y="372.40" width="0.80" height="9.70"/><rect x="255.00" y="372.40" width="0.80" height="9.70"/></g><g fill="#5e5e5e"><rect x="100.40" y="247.60" width="1.20" height="27.00"/><rect x="100.40" y="274.60" width="1.20" height="27.00"/><rect x="100.40" y="301.60" width="1.20" height="27.00"/><rect x="100.40" y="328.60" width="1.20" height="27.00"/><rect x="100.40" y="355.60" width="1.20" height="27.00"/><rect x="244.40" y="247.60" width="1.20" height="27.00"/><rect x="244.40" y="274.60" width="1.20" height="27.00"/><rect x="244.40" y="301.60" width="1.20" height="27.00"/><rect x="244.40" y="328.60" width="1.20" height="27.00"/><rect x="244.40" y="355.60" width="1.20" height="27.00"/></g><rect x="74.50" y="382.60" width="16.00" height="1.50" fill="#8c8c88"/><rect x="111.00" y="382.60" width="17.00" height="1.50" fill="#8c8c88"/><rect x="218.00" y="382.60" width="16.00" height="1.50" fill="#8c8c88"/><rect x="255.00" y="382.60" width="17.00" height="1.50" fill="#8c8c88"/></g><!--GEN_VP1END-->
<!--GEN_VP2START--><g id="vp2c"><g filter="url(#froof)"><rect x="420.00" y="236.30" width="113.60" height="6.80" fill="#8b8e83"/></g><rect x="435.50" y="237.20" width="98.00" height="5.20" fill="url(#pparapet2)"/><rect x="420.00" y="236.30" width="113.60" height="0.90" fill="#787a74"/><rect x="434.00" y="236.30" width="1.30" height="7.00" fill="#787a74"/><rect x="420.00" y="243.00" width="113.60" height="3.20" fill="#7c7d79"/><path d="M421 244.500 H533" stroke="#5a5a54" stroke-width="0.9" stroke-dasharray="4 1.500 2 1 6 2"/><rect x="418.50" y="246.00" width="132.00" height="144.20" fill="#7e7e7c"/><g fill="url(#pband)"><rect x="419.50" y="246.30" width="114.00" height="3.60"/><rect x="419.50" y="275.15" width="114.00" height="3.60"/><rect x="419.50" y="304.00" width="114.00" height="3.60"/><rect x="419.50" y="332.85" width="114.00" height="3.60"/><rect x="419.50" y="361.70" width="114.00" height="3.60"/></g><g fill="#6b4133" filter="url(#fbrick)"><rect x="419.50" y="250.70" width="14.00" height="14.70"/><rect x="435.50" y="250.70" width="97.80" height="14.70"/><rect x="419.50" y="279.55" width="14.00" height="14.70"/><rect x="435.50" y="279.55" width="97.80" height="14.70"/><rect x="419.50" y="308.40" width="14.00" height="14.70"/><rect x="435.50" y="308.40" width="97.80" height="14.70"/><rect x="419.50" y="337.25" width="14.00" height="14.70"/><rect x="435.50" y="337.25" width="97.80" height="14.70"/><rect x="419.50" y="366.10" width="14.00" height="14.70"/><rect x="435.50" y="366.10" width="97.80" height="14.70"/></g><g fill="#80533f" fill-opacity="0.5"><rect x="435.50" y="251.70" width="97.80" height="6.17"/><rect x="435.50" y="280.55" width="97.80" height="6.17"/><rect x="435.50" y="309.40" width="97.80" height="6.17"/><rect x="435.50" y="338.25" width="97.80" height="6.17"/><rect x="435.50" y="367.10" width="97.80" height="6.17"/></g><g fill="#2a1c18" fill-opacity="0.35"><rect x="419.50" y="250.70" width="14.00" height="14.70"/><rect x="419.50" y="279.55" width="14.00" height="14.70"/><rect x="419.50" y="308.40" width="14.00" height="14.70"/><rect x="419.50" y="337.25" width="14.00" height="14.70"/><rect x="419.50" y="366.10" width="14.00" height="14.70"/></g><g fill="#3e2e27" fill-opacity="0.8"><rect x="435.50" y="258.50" width="97.80" height="1.50"/><rect x="435.50" y="287.35" width="97.80" height="1.50"/><rect x="435.50" y="316.20" width="97.80" height="1.50"/><rect x="435.50" y="345.05" width="97.80" height="1.50"/><rect x="435.50" y="373.90" width="97.80" height="1.50"/></g><rect x="435.50" y="261.90" width="97.80" height="0.80" fill="#3e2e27" fill-opacity="0.55"/><path d="M436 251.90 H470" stroke="#cfc8c0" stroke-width="0.7" stroke-dasharray="2 1 4 1.500 1 1" stroke-opacity="0.7"/><path d="M470 257.70 H532" stroke="#a8a8a8" stroke-width="0.6" stroke-dasharray="1 1" stroke-opacity="0.6"/><path d="M422 255.30 l2 3 l2 -4 l2 5 l2 -4 l2 3 M421 261.30 h3 l1 2 h4 l1 -2 h2" stroke="#d8d0c8" stroke-width="0.6" fill="none" stroke-opacity="0.3"/><rect x="435.50" y="290.75" width="97.80" height="0.80" fill="#3e2e27" fill-opacity="0.55"/><path d="M436 280.75 H470" stroke="#cfc8c0" stroke-width="0.7" stroke-dasharray="2 1 4 1.500 1 1" stroke-opacity="0.7"/><path d="M470 286.55 H532" stroke="#a8a8a8" stroke-width="0.6" stroke-dasharray="1 1" stroke-opacity="0.6"/><path d="M422 284.15 l2 3 l2 -4 l2 5 l2 -4 l2 3 M421 290.15 h3 l1 2 h4 l1 -2 h2" stroke="#d8d0c8" stroke-width="0.6" fill="none" stroke-opacity="0.3"/><rect x="435.50" y="319.60" width="97.80" height="0.80" fill="#3e2e27" fill-opacity="0.55"/><path d="M436 309.60 H470" stroke="#cfc8c0" stroke-width="0.7" stroke-dasharray="2 1 4 1.500 1 1" stroke-opacity="0.7"/><path d="M470 315.40 H532" stroke="#a8a8a8" stroke-width="0.6" stroke-dasharray="1 1" stroke-opacity="0.6"/><path d="M422 313.00 l2 3 l2 -4 l2 5 l2 -4 l2 3 M421 319.00 h3 l1 2 h4 l1 -2 h2" stroke="#d8d0c8" stroke-width="0.6" fill="none" stroke-opacity="0.3"/><rect x="435.50" y="348.45" width="97.80" height="0.80" fill="#3e2e27" fill-opacity="0.55"/><path d="M436 338.45 H470" stroke="#cfc8c0" stroke-width="0.7" stroke-dasharray="2 1 4 1.500 1 1" stroke-opacity="0.7"/><path d="M470 344.25 H532" stroke="#a8a8a8" stroke-width="0.6" stroke-dasharray="1 1" stroke-opacity="0.6"/><path d="M422 341.85 l2 3 l2 -4 l2 5 l2 -4 l2 3 M421 347.85 h3 l1 2 h4 l1 -2 h2" stroke="#d8d0c8" stroke-width="0.6" fill="none" stroke-opacity="0.3"/><rect x="435.50" y="377.30" width="97.80" height="0.80" fill="#3e2e27" fill-opacity="0.55"/><path d="M436 367.30 H470" stroke="#cfc8c0" stroke-width="0.7" stroke-dasharray="2 1 4 1.500 1 1" stroke-opacity="0.7"/><path d="M470 373.10 H532" stroke="#a8a8a8" stroke-width="0.6" stroke-dasharray="1 1" stroke-opacity="0.6"/><path d="M422 370.70 l2 3 l2 -4 l2 5 l2 -4 l2 3 M421 376.70 h3 l1 2 h4 l1 -2 h2" stroke="#d8d0c8" stroke-width="0.6" fill="none" stroke-opacity="0.3"/><g fill="#8a8470" filter="url(#fstone)"><rect x="419.50" y="267.00" width="14.00" height="7.50"/><rect x="435.50" y="267.00" width="97.80" height="7.50"/><rect x="419.50" y="295.85" width="14.00" height="7.50"/><rect x="435.50" y="295.85" width="97.80" height="7.50"/><rect x="419.50" y="324.70" width="14.00" height="7.50"/><rect x="435.50" y="324.70" width="97.80" height="7.50"/><rect x="419.50" y="353.55" width="14.00" height="7.50"/><rect x="435.50" y="353.55" width="97.80" height="7.50"/><rect x="419.50" y="382.40" width="14.00" height="7.50"/><rect x="435.50" y="382.40" width="97.80" height="7.50"/></g><g fill="#85877a"><rect x="419.50" y="249.90" width="114.00" height="0.70"/><rect x="419.50" y="278.75" width="114.00" height="0.70"/><rect x="419.50" y="307.60" width="114.00" height="0.70"/><rect x="419.50" y="336.45" width="114.00" height="0.70"/><rect x="419.50" y="365.30" width="114.00" height="0.70"/></g><g fill="#898d83" filter="url(#fconc)"><rect x="534.60" y="246.60" width="15.40" height="143.20"/></g><rect x="521.300" y="332.500" width="19.200" height="33.500" rx="7" ry="7" fill="#6d6857"/><path d="M521.500 343 H540.500" stroke="#625d4e" stroke-width="0.8"/><path d="M540.600 341 V357" stroke="#e8e8e4" stroke-width="1"/></g><!--GEN_VP2END-->
<!--GEN_VP3START--><g id="vp3c"><g filter="url(#froof)"><path d="M32.2 437.9 H66.2 V425.3 H93.1 V437.9 H114.4 V425.3 H140.8 V437.9 H205.4 V425.3 H232.6 V437.9 H253.5 V425.3 H281 V437.9 H314.3 V530.9 H32.2 Z" fill="#81847a"/></g><g fill="#9a9e93" fill-opacity="0.3"><rect x="33.50" y="441.00" width="279.50" height="3.20"/><rect x="33.50" y="450.20" width="279.50" height="3.20"/><rect x="33.50" y="459.40" width="279.50" height="3.20"/><rect x="33.50" y="468.60" width="279.50" height="3.20"/><rect x="33.50" y="477.80" width="279.50" height="3.20"/><rect x="33.50" y="487.00" width="279.50" height="3.20"/><rect x="33.50" y="496.20" width="279.50" height="3.20"/><rect x="33.50" y="505.40" width="279.50" height="3.20"/><rect x="33.50" y="514.60" width="279.50" height="3.20"/><rect x="33.50" y="523.80" width="279.50" height="3.20"/></g><path d="M32.2 437.9 H66.2 V425.3 H93.1 V437.9 H114.4 V425.3 H140.8 V437.9 H205.4 V425.3 H232.6 V437.9 H253.5 V425.3 H281 V437.9 H314.3 V530.9 H32.2 Z" fill="none" stroke="#70726c" stroke-width="1.5"/><rect x="65.70" y="530.60" width="75.60" height="11.00" fill="#7b7c78"/><g filter="url(#fwood)"><rect x="68.20" y="531.80" width="33.50" height="8.40" fill="#7e4320"/><rect x="104.50" y="531.80" width="34.30" height="8.40" fill="#7e4320"/></g><path d="M88.5 541.600 C94.5 545 111.7 545 117.7 541.600 Z" fill="#8a8b86" stroke="#6f706c" stroke-width="0.6"/><rect x="205.40" y="530.60" width="75.60" height="11.00" fill="#7b7c78"/><g filter="url(#fwood)"><rect x="208.00" y="531.80" width="33.40" height="8.40" fill="#7e4320"/><rect x="244.60" y="531.80" width="32.90" height="8.40" fill="#7e4320"/></g><path d="M228 541.600 C234 545 252.8 545 258.8 541.600 Z" fill="#8a8b86" stroke="#6f706c" stroke-width="0.6"/></g><!--GEN_VP3END-->
<!--GEN_VP4START--><g id="vp4c"><g filter="url(#froof2)"><path d="M412.5 479.3 L422 474.4 L422 466 L433.7 460.5 L440.3 463.7 L444.8 461.2 L444.8 453.4 L455.8 447.5 L463.2 450.8 L488.4 436.3 L488.4 429.1 L499.1 422.9 L505.9 426.3 L510.7 423.5 L510.7 416.5 L522.8 409.3 L529.2 412.8 L544.5 404.2 L587.3 427.5 L455 503.2 Z" fill="#6b6e65"/></g><clipPath id="cproof"><path d="M412.5 479.3 L422 474.4 L422 466 L433.7 460.5 L440.3 463.7 L444.8 461.2 L444.8 453.4 L455.8 447.5 L463.2 450.8 L488.4 436.3 L488.4 429.1 L499.1 422.9 L505.9 426.3 L510.7 423.5 L510.7 416.5 L522.8 409.3 L529.2 412.8 L544.5 404.2 L587.3 427.5 L455 503.2 Z"/></clipPath><g clip-path="url(#cproof)" stroke="#8d9187" stroke-opacity="0.28" stroke-width="2.2"><path d="M417.2 482.0 L549.3 406.8"/><path d="M421.9 484.6 L554.0 409.4"/><path d="M426.7 487.3 L558.8 412.0"/><path d="M431.4 489.9 L563.5 414.6"/><path d="M436.1 492.6 L568.3 417.1"/><path d="M440.8 495.2 L573.0 419.7"/><path d="M445.6 497.9 L577.8 422.3"/><path d="M450.3 500.5 L582.5 424.9"/></g><path d="M422 466 L424.5 467.2 L424.5 474.09999999999997 L422 474.4 Z" fill="#879492"/><path d="M444.8 453.4 L447.3 454.59999999999997 L447.3 460.9 L444.8 461.2 Z" fill="#879492"/><path d="M488.4 429.1 L490.9 430.3 L490.9 436.0 L488.4 436.3 Z" fill="#879492"/><path d="M510.7 416.5 L513.2 417.7 L513.2 423.2 L510.7 423.5 Z" fill="#879492"/><path d="M412.5 479.3 L422 474.4 L422 466 L433.7 460.5 L440.3 463.7 L444.8 461.2 L444.8 453.4 L455.8 447.5 L463.2 450.8 L488.4 436.3 L488.4 429.1 L499.1 422.9 L505.9 426.3 L510.7 423.5 L510.7 416.5 L522.8 409.3 L529.2 412.8 L544.5 404.2 L587.3 427.5 L455 503.2 Z" fill="none" stroke="#6c7270" stroke-width="0.8"/><path d="M412.5 479.3 L455 503.2 L455 506.6 L412.5 483.2 Z" fill="#74817f"/><path d="M455 503.2 L587.3 427.5 L587.3 431.0 L455 506.6 Z" fill="#707c7a"/><path d="M412.5 479.8 L455 503.7 L587.3 428.0" fill="none" stroke="#8b9a99" stroke-width="0.9"/><path d="M455 506.6 L587.3 431.0 L587.3 506 L455 568.6 Z" fill="#7c7d79"/><g fill="#66726f"><path d="M456.0 506.1 L527.6 465.2 L527.6 466.9 L456.0 507.6 Z"/><path d="M456.0 518.5 L527.6 479.0 L527.6 480.7 L456.0 520.0 Z"/><path d="M456.0 530.9 L527.6 492.8 L527.6 494.5 L456.0 532.4 Z"/><path d="M456.0 543.3 L527.6 506.6 L527.6 508.3 L456.0 544.8 Z"/><path d="M456.0 555.7 L527.6 520.5 L527.6 522.1 L456.0 557.2 Z"/><path d="M527.6 465.2 L586.9 431.3 L586.9 433.2 L527.6 466.9 Z"/><path d="M527.6 479.0 L586.9 446.3 L586.9 448.1 L527.6 480.7 Z"/><path d="M527.6 492.8 L586.9 461.3 L586.9 463.1 L527.6 494.5 Z"/><path d="M527.6 506.6 L586.9 476.2 L586.9 478.1 L527.6 508.3 Z"/><path d="M527.6 520.5 L586.9 491.2 L586.9 493.0 L527.6 522.1 Z"/></g><g fill="#824634" filter="url(#fbrick2)"><path d="M456.0 508.2 L460.6 505.6 L460.6 511.9 L456.0 514.5 Z"/><path d="M470.0 500.2 L477.8 495.8 L477.8 502.3 L470.0 506.7 Z"/><path d="M489.8 489.0 L492.8 487.3 L492.8 492.9 L489.8 494.6 Z"/><path d="M487.8 490.1 L489.3 489.3 L489.3 490.8 L487.8 491.7 Z"/><path d="M487.8 492.5 L489.3 491.7 L489.3 494.8 L487.8 495.7 Z"/><path d="M484.9 491.8 L486.3 491.0 L486.3 492.5 L484.9 493.3 Z"/><path d="M484.9 494.2 L486.3 493.4 L486.3 496.5 L484.9 497.3 Z"/><path d="M523.7 469.7 L527.6 467.5 L527.6 474.6 L523.7 476.7 Z"/><path d="M508.6 478.3 L515.7 474.3 L515.7 481.2 L508.6 485.2 Z"/><path d="M494.3 486.4 L497.2 484.8 L497.2 490.4 L494.3 492.0 Z"/><path d="M497.7 484.5 L499.2 483.7 L499.2 485.2 L497.7 486.1 Z"/><path d="M497.7 486.9 L499.2 486.1 L499.2 489.3 L497.7 490.1 Z"/><path d="M500.7 482.8 L502.0 482.0 L502.0 483.6 L500.7 484.4 Z"/><path d="M500.7 485.3 L502.0 484.5 L502.0 487.7 L500.7 488.5 Z"/><path d="M456.0 520.6 L460.6 518.1 L460.6 524.4 L456.0 526.9 Z"/><path d="M470.0 512.9 L477.8 508.6 L477.8 515.2 L470.0 519.4 Z"/><path d="M489.8 502.1 L492.8 500.4 L492.8 506.0 L489.8 507.6 Z"/><path d="M487.8 503.2 L489.3 502.3 L489.3 503.9 L487.8 504.7 Z"/><path d="M487.8 505.6 L489.3 504.7 L489.3 507.9 L487.8 508.7 Z"/><path d="M484.9 504.8 L486.3 504.0 L486.3 505.5 L484.9 506.3 Z"/><path d="M484.9 507.2 L486.3 506.4 L486.3 509.5 L484.9 510.3 Z"/><path d="M523.7 483.5 L527.6 481.3 L527.6 488.4 L523.7 490.5 Z"/><path d="M508.6 491.7 L515.7 487.9 L515.7 494.8 L508.6 498.6 Z"/><path d="M494.3 499.6 L497.2 498.0 L497.2 503.6 L494.3 505.2 Z"/><path d="M497.7 497.7 L499.2 496.9 L499.2 498.5 L497.7 499.3 Z"/><path d="M497.7 500.2 L499.2 499.4 L499.2 502.5 L497.7 503.3 Z"/><path d="M500.7 496.1 L502.0 495.4 L502.0 496.9 L500.7 497.7 Z"/><path d="M500.7 498.6 L502.0 497.8 L502.0 501.0 L500.7 501.8 Z"/><path d="M456.0 533.0 L460.6 530.5 L460.6 536.9 L456.0 539.3 Z"/><path d="M470.0 525.6 L477.8 521.4 L477.8 528.0 L470.0 532.1 Z"/><path d="M489.8 515.1 L492.8 513.5 L492.8 519.1 L489.8 520.7 Z"/><path d="M487.8 516.2 L489.3 515.4 L489.3 516.9 L487.8 517.7 Z"/><path d="M487.8 518.6 L489.3 517.8 L489.3 520.9 L487.8 521.7 Z"/><path d="M484.9 517.7 L486.3 517.0 L486.3 518.5 L484.9 519.3 Z"/><path d="M484.9 520.1 L486.3 519.4 L486.3 522.5 L484.9 523.3 Z"/><path d="M523.7 497.2 L527.6 495.1 L527.6 502.2 L523.7 504.2 Z"/><path d="M508.6 505.2 L515.7 501.4 L515.7 508.4 L508.6 512.0 Z"/><path d="M494.3 512.7 L497.2 511.2 L497.2 516.8 L494.3 518.4 Z"/><path d="M497.7 510.9 L499.2 510.1 L499.2 511.7 L497.7 512.5 Z"/><path d="M497.7 513.4 L499.2 512.6 L499.2 515.8 L497.7 516.6 Z"/><path d="M500.7 509.4 L502.0 508.7 L502.0 510.2 L500.7 511.0 Z"/><path d="M500.7 511.8 L502.0 511.1 L502.0 514.3 L500.7 515.0 Z"/><path d="M456.0 545.4 L460.6 543.0 L460.6 549.4 L456.0 551.7 Z"/><path d="M470.0 538.3 L477.8 534.3 L477.8 540.8 L470.0 544.7 Z"/><path d="M489.8 528.2 L492.8 526.7 L492.8 532.2 L489.8 533.7 Z"/><path d="M487.8 529.2 L489.3 528.4 L489.3 530.0 L487.8 530.8 Z"/><path d="M487.8 531.6 L489.3 530.9 L489.3 534.0 L487.8 534.8 Z"/><path d="M484.9 530.7 L486.3 530.0 L486.3 531.5 L484.9 532.2 Z"/><path d="M484.9 533.1 L486.3 532.4 L486.3 535.5 L484.9 536.2 Z"/><path d="M523.7 510.9 L527.6 508.9 L527.6 516.0 L523.7 517.9 Z"/><path d="M508.6 518.6 L515.7 515.0 L515.7 522.0 L508.6 525.5 Z"/><path d="M494.3 525.9 L497.2 524.4 L497.2 530.0 L494.3 531.5 Z"/><path d="M497.7 524.1 L499.2 523.4 L499.2 525.0 L497.7 525.7 Z"/><path d="M497.7 526.6 L499.2 525.9 L499.2 529.0 L497.7 529.8 Z"/><path d="M500.7 522.7 L502.0 522.0 L502.0 523.5 L500.7 524.2 Z"/><path d="M500.7 525.1 L502.0 524.4 L502.0 527.6 L500.7 528.3 Z"/><path d="M456.0 557.8 L460.6 555.5 L460.6 561.9 L456.0 564.1 Z"/><path d="M470.0 550.9 L477.8 547.1 L477.8 553.7 L470.0 557.4 Z"/><path d="M489.8 541.2 L492.8 539.8 L492.8 545.4 L489.8 546.8 Z"/><path d="M487.8 542.2 L489.3 541.5 L489.3 543.0 L487.8 543.8 Z"/><path d="M487.8 544.6 L489.3 543.9 L489.3 547.1 L487.8 547.8 Z"/><path d="M484.9 543.7 L486.3 543.0 L486.3 544.5 L484.9 545.2 Z"/><path d="M484.9 546.1 L486.3 545.4 L486.3 548.5 L484.9 549.2 Z"/><path d="M523.7 524.6 L527.6 522.8 L527.6 529.8 L523.7 531.7 Z"/><path d="M508.6 532.0 L515.7 528.6 L515.7 535.5 L508.6 538.9 Z"/><path d="M494.3 539.1 L497.2 537.6 L497.2 543.2 L494.3 544.7 Z"/><path d="M497.7 537.4 L499.2 536.6 L499.2 538.2 L497.7 538.9 Z"/><path d="M497.7 539.8 L499.2 539.1 L499.2 542.3 L497.7 543.0 Z"/><path d="M500.7 535.9 L502.0 535.3 L502.0 536.8 L500.7 537.5 Z"/><path d="M500.7 538.4 L502.0 537.7 L502.0 540.9 L500.7 541.6 Z"/><path d="M527.6 467.5 L531.4 465.4 L531.4 472.5 L527.6 474.6 Z"/><path d="M539.1 461.0 L545.6 457.3 L545.6 464.5 L539.1 468.2 Z"/><path d="M555.5 451.7 L558.0 450.3 L558.0 456.4 L555.5 457.8 Z"/><path d="M553.8 452.6 L555.1 451.9 L555.1 453.6 L553.8 454.3 Z"/><path d="M553.8 455.3 L555.1 454.6 L555.1 458.0 L553.8 458.7 Z"/><path d="M551.4 454.0 L552.6 453.3 L552.6 455.0 L551.4 455.7 Z"/><path d="M551.4 456.7 L552.6 456.0 L552.6 459.4 L551.4 460.1 Z"/><path d="M583.7 435.7 L586.9 433.8 L586.9 441.5 L583.7 443.3 Z"/><path d="M571.1 442.8 L577.0 439.5 L577.0 447.0 L571.1 450.3 Z"/><path d="M559.2 449.6 L561.6 448.2 L561.6 454.3 L559.2 455.7 Z"/><path d="M562.1 447.9 L563.3 447.3 L563.3 449.0 L562.1 449.7 Z"/><path d="M562.1 450.6 L563.3 449.9 L563.3 453.4 L562.1 454.1 Z"/><path d="M564.5 446.6 L565.6 445.9 L565.6 447.6 L564.5 448.3 Z"/><path d="M564.5 449.3 L565.6 448.6 L565.6 452.1 L564.5 452.8 Z"/><path d="M527.6 481.3 L531.4 479.2 L531.4 486.3 L527.6 488.4 Z"/><path d="M539.1 475.0 L545.6 471.5 L545.6 478.7 L539.1 482.2 Z"/><path d="M555.5 466.0 L558.0 464.7 L558.0 470.8 L555.5 472.2 Z"/><path d="M553.8 467.0 L555.1 466.3 L555.1 468.0 L553.8 468.6 Z"/><path d="M553.8 469.6 L555.1 468.9 L555.1 472.4 L553.8 473.1 Z"/><path d="M551.4 468.3 L552.6 467.6 L552.6 469.3 L551.4 470.0 Z"/><path d="M551.4 470.9 L552.6 470.3 L552.6 473.7 L551.4 474.4 Z"/><path d="M583.7 450.6 L586.9 448.8 L586.9 456.4 L583.7 458.2 Z"/><path d="M571.1 457.5 L577.0 454.2 L577.0 461.8 L571.1 465.0 Z"/><path d="M559.2 464.0 L561.6 462.7 L561.6 468.8 L559.2 470.1 Z"/><path d="M562.1 462.4 L563.3 461.8 L563.3 463.5 L562.1 464.1 Z"/><path d="M562.1 465.1 L563.3 464.4 L563.3 467.9 L562.1 468.6 Z"/><path d="M564.5 461.1 L565.6 460.5 L565.6 462.2 L564.5 462.8 Z"/><path d="M564.5 463.8 L565.6 463.2 L565.6 466.7 L564.5 467.3 Z"/><path d="M527.6 495.1 L531.4 493.1 L531.4 500.2 L527.6 502.2 Z"/><path d="M539.1 489.1 L545.6 485.6 L545.6 492.9 L539.1 496.2 Z"/><path d="M555.5 480.4 L558.0 479.1 L558.0 485.2 L555.5 486.5 Z"/><path d="M553.8 481.3 L555.1 480.6 L555.1 482.3 L553.8 483.0 Z"/><path d="M553.8 483.9 L555.1 483.3 L555.1 486.7 L553.8 487.4 Z"/><path d="M551.4 482.6 L552.6 481.9 L552.6 483.6 L551.4 484.2 Z"/><path d="M551.4 485.2 L552.6 484.6 L552.6 488.0 L551.4 488.6 Z"/><path d="M583.7 465.5 L586.9 463.8 L586.9 471.4 L583.7 473.1 Z"/><path d="M571.1 472.1 L577.0 469.0 L577.0 476.6 L571.1 479.6 Z"/><path d="M559.2 478.4 L561.6 477.1 L561.6 483.3 L559.2 484.6 Z"/><path d="M562.1 476.9 L563.3 476.3 L563.3 478.0 L562.1 478.6 Z"/><path d="M562.1 479.6 L563.3 479.0 L563.3 482.4 L562.1 483.1 Z"/><path d="M564.5 475.6 L565.6 475.0 L565.6 476.8 L564.5 477.3 Z"/><path d="M564.5 478.3 L565.6 477.7 L565.6 481.2 L564.5 481.8 Z"/><path d="M527.6 508.9 L531.4 507.0 L531.4 514.1 L527.6 516.0 Z"/><path d="M539.1 503.1 L545.6 499.8 L545.6 507.0 L539.1 510.3 Z"/><path d="M555.5 494.7 L558.0 493.5 L558.0 499.6 L555.5 500.9 Z"/><path d="M553.8 495.6 L555.1 495.0 L555.1 496.7 L553.8 497.3 Z"/><path d="M553.8 498.2 L555.1 497.6 L555.1 501.1 L553.8 501.7 Z"/><path d="M551.4 496.8 L552.6 496.2 L552.6 497.9 L551.4 498.5 Z"/><path d="M551.4 499.5 L552.6 498.9 L552.6 502.3 L551.4 502.9 Z"/><path d="M583.7 480.4 L586.9 478.7 L586.9 486.4 L583.7 488.0 Z"/><path d="M571.1 486.8 L577.0 483.8 L577.0 491.4 L571.1 494.3 Z"/><path d="M559.2 492.9 L561.6 491.6 L561.6 497.8 L559.2 499.0 Z"/><path d="M562.1 491.4 L563.3 490.8 L563.3 492.5 L562.1 493.1 Z"/><path d="M562.1 494.1 L563.3 493.5 L563.3 497.0 L562.1 497.6 Z"/><path d="M564.5 490.2 L565.6 489.6 L565.6 491.3 L564.5 491.9 Z"/><path d="M564.5 492.8 L565.6 492.3 L565.6 495.8 L564.5 496.3 Z"/><path d="M527.6 522.8 L531.4 520.9 L531.4 528.0 L527.6 529.8 Z"/><path d="M539.1 517.1 L545.6 513.9 L545.6 521.2 L539.1 524.3 Z"/><path d="M555.5 509.1 L558.0 507.9 L558.0 514.0 L555.5 515.2 Z"/><path d="M553.8 509.9 L555.1 509.3 L555.1 511.0 L553.8 511.6 Z"/><path d="M553.8 512.6 L555.1 512.0 L555.1 515.4 L553.8 516.0 Z"/><path d="M551.4 511.1 L552.6 510.5 L552.6 512.2 L551.4 512.8 Z"/><path d="M551.4 513.7 L552.6 513.2 L552.6 516.6 L551.4 517.2 Z"/><path d="M583.7 495.3 L586.9 493.7 L586.9 501.4 L583.7 502.9 Z"/><path d="M571.1 501.5 L577.0 498.6 L577.0 506.1 L571.1 508.9 Z"/><path d="M559.2 507.3 L561.6 506.1 L561.6 512.2 L559.2 513.4 Z"/><path d="M562.1 505.9 L563.3 505.3 L563.3 507.0 L562.1 507.6 Z"/><path d="M562.1 508.6 L563.3 508.0 L563.3 511.5 L562.1 512.0 Z"/><path d="M564.5 504.7 L565.6 504.1 L565.6 505.9 L564.5 506.4 Z"/><path d="M564.5 507.4 L565.6 506.8 L565.6 510.3 L564.5 510.9 Z"/></g><g fill="#7a7563" filter="url(#fstone2)"><path d="M455.4 515.2 L473.4 505.2 L473.4 508.5 L455.4 518.5 Z"/><path d="M512.6 483.3 L527.6 475.0 L527.6 478.6 L512.6 486.9 Z"/><path d="M455.4 527.6 L473.4 517.9 L473.4 521.3 L455.4 530.9 Z"/><path d="M512.6 496.8 L527.6 488.8 L527.6 492.4 L512.6 500.4 Z"/><path d="M455.4 540.0 L473.4 530.7 L473.4 534.0 L455.4 543.2 Z"/><path d="M512.6 510.4 L527.6 502.6 L527.6 506.2 L512.6 513.9 Z"/><path d="M455.4 552.4 L473.4 543.4 L473.4 546.8 L455.4 555.6 Z"/><path d="M512.6 523.9 L527.6 516.4 L527.6 520.0 L512.6 527.4 Z"/><path d="M455.4 564.8 L473.4 556.2 L473.4 559.5 L455.4 568.0 Z"/><path d="M512.6 537.4 L527.6 530.2 L527.6 533.9 L512.6 540.9 Z"/><path d="M527.6 475.0 L541.9 467.0 L541.9 470.7 L527.6 478.6 Z"/><path d="M574.4 448.9 L587.2 441.7 L587.2 445.7 L574.4 452.8 Z"/><path d="M527.6 488.8 L541.9 481.1 L541.9 484.8 L527.6 492.4 Z"/><path d="M574.4 463.6 L587.2 456.7 L587.2 460.7 L574.4 467.5 Z"/><path d="M527.6 502.6 L541.9 495.2 L541.9 498.9 L527.6 506.2 Z"/><path d="M574.4 478.3 L587.2 471.7 L587.2 475.6 L574.4 482.2 Z"/><path d="M527.6 516.4 L541.9 509.3 L541.9 513.0 L527.6 520.0 Z"/><path d="M574.4 493.1 L587.2 486.7 L587.2 490.6 L574.4 496.9 Z"/><path d="M527.6 530.2 L541.9 523.4 L541.9 527.1 L527.6 533.9 Z"/><path d="M574.4 507.8 L587.2 501.7 L587.2 505.6 L574.4 511.7 Z"/></g><g fill="#878b82" filter="url(#fconc)"><path d="M473.4 503.7 L493.1 492.7 L493.1 497.8 L473.4 508.7 Z"/><path d="M493.9 492.2 L512.6 481.8 L512.6 487.0 L493.9 497.4 Z"/><path d="M473.4 516.5 L493.1 505.8 L493.1 510.9 L473.4 521.4 Z"/><path d="M493.9 505.4 L512.6 495.3 L512.6 500.6 L493.9 510.5 Z"/><path d="M473.4 529.2 L493.1 518.9 L493.1 524.1 L473.4 534.2 Z"/><path d="M493.9 518.5 L512.6 508.8 L512.6 514.1 L493.9 523.6 Z"/><path d="M473.4 542.0 L493.1 532.1 L493.1 537.2 L473.4 546.9 Z"/><path d="M493.9 531.7 L512.6 522.3 L512.6 527.6 L493.9 536.8 Z"/><path d="M473.4 554.7 L493.1 545.2 L493.1 550.3 L473.4 559.7 Z"/><path d="M493.9 544.8 L512.6 535.8 L512.6 541.1 L493.9 549.9 Z"/><path d="M541.9 465.4 L558.2 456.2 L558.2 461.9 L541.9 470.9 Z"/><path d="M558.9 455.9 L574.4 447.2 L574.4 452.9 L558.9 461.5 Z"/><path d="M541.9 479.5 L558.2 470.7 L558.2 476.3 L541.9 485.0 Z"/><path d="M558.9 470.3 L574.4 461.9 L574.4 467.6 L558.9 475.9 Z"/><path d="M541.9 493.6 L558.2 485.1 L558.2 490.7 L541.9 499.0 Z"/><path d="M558.9 484.7 L574.4 476.6 L574.4 482.4 L558.9 490.3 Z"/><path d="M541.9 507.6 L558.2 499.5 L558.2 505.1 L541.9 513.1 Z"/><path d="M558.9 499.1 L574.4 491.4 L574.4 497.1 L558.9 504.7 Z"/><path d="M541.9 521.7 L558.2 513.9 L558.2 519.5 L541.9 527.2 Z"/><path d="M558.9 513.6 L574.4 506.1 L574.4 511.8 L558.9 519.2 Z"/></g><g fill="#6c6460"><path d="M461.4 505.1 L464.7 503.3 L464.7 505.1 L461.4 506.9 Z"/><path d="M465.7 502.7 L469.0 500.8 L469.0 502.6 L465.7 504.5 Z"/><path d="M461.4 507.9 L462.5 507.2 L462.5 510.5 L461.4 511.1 Z"/><path d="M463.6 506.6 L464.7 506.0 L464.7 509.2 L463.6 509.9 Z"/><path d="M465.7 505.4 L466.9 504.8 L466.9 508.0 L465.7 508.7 Z"/><path d="M467.9 504.2 L469.0 503.6 L469.0 506.9 L467.9 507.5 Z"/><path d="M478.3 495.5 L479.8 494.7 L479.8 496.4 L478.3 497.2 Z"/><path d="M478.3 497.9 L479.8 497.1 L479.8 500.2 L478.3 501.0 Z"/><path d="M481.3 493.8 L484.0 492.3 L484.0 494.0 L481.3 495.5 Z"/><path d="M481.3 496.1 L484.0 494.6 L484.0 495.8 L481.3 497.3 Z"/><path d="M481.3 497.8 L484.0 496.3 L484.0 497.8 L481.3 499.3 Z"/><path d="M516.5 473.8 L519.4 472.2 L519.4 474.2 L516.5 475.8 Z"/><path d="M520.3 471.7 L523.1 470.1 L523.1 472.1 L520.3 473.6 Z"/><path d="M516.5 476.8 L517.5 476.2 L517.5 479.7 L516.5 480.3 Z"/><path d="M518.4 475.7 L519.4 475.1 L519.4 478.7 L518.4 479.2 Z"/><path d="M520.3 474.7 L521.3 474.1 L521.3 477.7 L520.3 478.2 Z"/><path d="M522.1 473.6 L523.1 473.1 L523.1 476.6 L522.1 477.2 Z"/><path d="M506.7 479.4 L508.0 478.6 L508.0 480.4 L506.7 481.2 Z"/><path d="M506.7 481.9 L508.0 481.1 L508.0 484.4 L506.7 485.2 Z"/><path d="M502.6 481.7 L505.1 480.3 L505.1 482.1 L502.6 483.5 Z"/><path d="M502.6 484.1 L505.1 482.7 L505.1 483.9 L502.6 485.3 Z"/><path d="M502.6 485.9 L505.1 484.5 L505.1 486.0 L502.6 487.4 Z"/><path d="M461.4 517.6 L464.7 515.8 L464.7 517.7 L461.4 519.4 Z"/><path d="M465.7 515.3 L469.0 513.5 L469.0 515.3 L465.7 517.1 Z"/><path d="M461.4 520.4 L462.5 519.8 L462.5 523.0 L461.4 523.6 Z"/><path d="M463.6 519.2 L464.7 518.6 L464.7 521.8 L463.6 522.4 Z"/><path d="M465.7 518.0 L466.9 517.4 L466.9 520.7 L465.7 521.3 Z"/><path d="M467.9 516.8 L469.0 516.2 L469.0 519.5 L467.9 520.1 Z"/><path d="M478.3 508.3 L479.8 507.5 L479.8 509.3 L478.3 510.0 Z"/><path d="M478.3 510.7 L479.8 509.9 L479.8 513.1 L478.3 513.8 Z"/><path d="M481.3 506.7 L484.0 505.2 L484.0 507.0 L481.3 508.4 Z"/><path d="M481.3 509.0 L484.0 507.6 L484.0 508.7 L481.3 510.2 Z"/><path d="M481.3 510.7 L484.0 509.3 L484.0 510.8 L481.3 512.2 Z"/><path d="M516.5 487.4 L519.4 485.8 L519.4 487.8 L516.5 489.4 Z"/><path d="M520.3 485.3 L523.1 483.8 L523.1 485.8 L520.3 487.3 Z"/><path d="M516.5 490.4 L517.5 489.8 L517.5 493.4 L516.5 493.9 Z"/><path d="M518.4 489.3 L519.4 488.8 L519.4 492.3 L518.4 492.9 Z"/><path d="M520.3 488.3 L521.3 487.8 L521.3 491.3 L520.3 491.9 Z"/><path d="M522.1 487.3 L523.1 486.8 L523.1 490.4 L522.1 490.9 Z"/><path d="M506.7 492.8 L508.0 492.1 L508.0 493.9 L506.7 494.6 Z"/><path d="M506.7 495.3 L508.0 494.5 L508.0 497.8 L506.7 498.5 Z"/><path d="M502.6 495.0 L505.1 493.7 L505.1 495.4 L502.6 496.8 Z"/><path d="M502.6 497.5 L505.1 496.1 L505.1 497.3 L502.6 498.6 Z"/><path d="M502.6 499.2 L505.1 497.8 L505.1 499.4 L502.6 500.7 Z"/><path d="M461.4 530.1 L464.7 528.4 L464.7 530.2 L461.4 532.0 Z"/><path d="M465.7 527.8 L469.0 526.1 L469.0 528.0 L465.7 529.7 Z"/><path d="M461.4 532.9 L462.5 532.3 L462.5 535.5 L461.4 536.1 Z"/><path d="M463.6 531.7 L464.7 531.1 L464.7 534.4 L463.6 535.0 Z"/><path d="M465.7 530.6 L466.9 530.0 L466.9 533.3 L465.7 533.9 Z"/><path d="M467.9 529.5 L469.0 528.9 L469.0 532.2 L467.9 532.8 Z"/><path d="M478.3 521.2 L479.8 520.4 L479.8 522.1 L478.3 522.9 Z"/><path d="M478.3 523.6 L479.8 522.8 L479.8 525.9 L478.3 526.7 Z"/><path d="M481.3 519.6 L484.0 518.2 L484.0 519.9 L481.3 521.3 Z"/><path d="M481.3 521.9 L484.0 520.5 L484.0 521.7 L481.3 523.1 Z"/><path d="M481.3 523.6 L484.0 522.2 L484.0 523.7 L481.3 525.1 Z"/><path d="M516.5 501.0 L519.4 499.5 L519.4 501.5 L516.5 502.9 Z"/><path d="M520.3 499.0 L523.1 497.5 L523.1 499.5 L520.3 501.0 Z"/><path d="M516.5 503.9 L517.5 503.4 L517.5 507.0 L516.5 507.5 Z"/><path d="M518.4 502.9 L519.4 502.4 L519.4 506.0 L518.4 506.5 Z"/><path d="M520.3 502.0 L521.3 501.5 L521.3 505.0 L520.3 505.5 Z"/><path d="M522.1 501.0 L523.1 500.5 L523.1 504.1 L522.1 504.6 Z"/><path d="M506.7 506.2 L508.0 505.5 L508.0 507.3 L506.7 508.0 Z"/><path d="M506.7 508.7 L508.0 508.0 L508.0 511.2 L506.7 511.9 Z"/><path d="M502.6 508.4 L505.1 507.0 L505.1 508.8 L502.6 510.1 Z"/><path d="M502.6 510.8 L505.1 509.5 L505.1 510.6 L502.6 512.0 Z"/><path d="M502.6 512.5 L505.1 511.2 L505.1 512.7 L502.6 514.0 Z"/><path d="M461.4 542.7 L464.7 541.0 L464.7 542.8 L461.4 544.5 Z"/><path d="M465.7 540.4 L469.0 538.8 L469.0 540.6 L465.7 542.3 Z"/><path d="M461.4 545.4 L462.5 544.8 L462.5 548.1 L461.4 548.6 Z"/><path d="M463.6 544.3 L464.7 543.7 L464.7 547.0 L463.6 547.5 Z"/><path d="M465.7 543.2 L466.9 542.6 L466.9 545.9 L465.7 546.5 Z"/><path d="M467.9 542.1 L469.0 541.5 L469.0 544.8 L467.9 545.4 Z"/><path d="M478.3 534.0 L479.8 533.3 L479.8 535.0 L478.3 535.7 Z"/><path d="M478.3 536.4 L479.8 535.7 L479.8 538.8 L478.3 539.5 Z"/><path d="M481.3 532.5 L484.0 531.1 L484.0 532.9 L481.3 534.2 Z"/><path d="M481.3 534.8 L484.0 533.5 L484.0 534.6 L481.3 536.0 Z"/><path d="M481.3 536.5 L484.0 535.2 L484.0 536.7 L481.3 538.0 Z"/><path d="M516.5 514.6 L519.4 513.1 L519.4 515.1 L516.5 516.5 Z"/><path d="M520.3 512.7 L523.1 511.2 L523.1 513.2 L520.3 514.6 Z"/><path d="M516.5 517.5 L517.5 517.0 L517.5 520.6 L516.5 521.1 Z"/><path d="M518.4 516.6 L519.4 516.1 L519.4 519.6 L518.4 520.1 Z"/><path d="M520.3 515.6 L521.3 515.2 L521.3 518.7 L520.3 519.2 Z"/><path d="M522.1 514.7 L523.1 514.2 L523.1 517.8 L522.1 518.3 Z"/><path d="M506.7 519.6 L508.0 518.9 L508.0 520.7 L506.7 521.4 Z"/><path d="M506.7 522.1 L508.0 521.4 L508.0 524.7 L506.7 525.3 Z"/><path d="M502.6 521.7 L505.1 520.4 L505.1 522.2 L502.6 523.4 Z"/><path d="M502.6 524.1 L505.1 522.8 L505.1 524.0 L502.6 525.3 Z"/><path d="M502.6 525.8 L505.1 524.5 L505.1 526.1 L502.6 527.3 Z"/><path d="M461.4 555.2 L464.7 553.6 L464.7 555.4 L461.4 557.0 Z"/><path d="M465.7 553.0 L469.0 551.4 L469.0 553.3 L465.7 554.8 Z"/><path d="M461.4 557.9 L462.5 557.3 L462.5 560.6 L461.4 561.1 Z"/><path d="M463.6 556.8 L464.7 556.3 L464.7 559.5 L463.6 560.1 Z"/><path d="M465.7 555.8 L466.9 555.2 L466.9 558.5 L465.7 559.0 Z"/><path d="M467.9 554.7 L469.0 554.2 L469.0 557.5 L467.9 558.0 Z"/><path d="M478.3 546.9 L479.8 546.1 L479.8 547.9 L478.3 548.6 Z"/><path d="M478.3 549.2 L479.8 548.5 L479.8 551.7 L478.3 552.4 Z"/><path d="M481.3 545.4 L484.0 544.1 L484.0 545.8 L481.3 547.1 Z"/><path d="M481.3 547.7 L484.0 546.4 L484.0 547.6 L481.3 548.9 Z"/><path d="M481.3 549.4 L484.0 548.1 L484.0 549.6 L481.3 550.9 Z"/><path d="M516.5 528.2 L519.4 526.8 L519.4 528.7 L516.5 530.1 Z"/><path d="M520.3 526.3 L523.1 525.0 L523.1 526.9 L520.3 528.3 Z"/><path d="M516.5 531.1 L517.5 530.7 L517.5 534.2 L516.5 534.6 Z"/><path d="M518.4 530.2 L519.4 529.7 L519.4 533.3 L518.4 533.7 Z"/><path d="M520.3 529.3 L521.3 528.8 L521.3 532.4 L520.3 532.8 Z"/><path d="M522.1 528.4 L523.1 528.0 L523.1 531.5 L522.1 532.0 Z"/><path d="M506.7 533.0 L508.0 532.3 L508.0 534.1 L506.7 534.8 Z"/><path d="M506.7 535.5 L508.0 534.8 L508.0 538.1 L506.7 538.7 Z"/><path d="M502.6 535.0 L505.1 533.8 L505.1 535.5 L502.6 536.8 Z"/><path d="M502.6 537.4 L505.1 536.2 L505.1 537.4 L502.6 538.6 Z"/><path d="M502.6 539.1 L505.1 537.9 L505.1 539.4 L502.6 540.7 Z"/><path d="M532.0 465.0 L534.7 463.5 L534.7 465.5 L532.0 467.0 Z"/><path d="M535.6 463.0 L538.3 461.5 L538.3 463.5 L535.6 465.0 Z"/><path d="M532.0 468.0 L532.9 467.5 L532.9 471.1 L532.0 471.7 Z"/><path d="M533.8 467.0 L534.8 466.5 L534.8 470.1 L533.8 470.6 Z"/><path d="M535.6 466.0 L536.5 465.5 L536.5 469.1 L535.6 469.6 Z"/><path d="M537.3 465.0 L538.3 464.5 L538.3 468.2 L537.3 468.7 Z"/><path d="M546.0 457.1 L547.2 456.4 L547.2 458.3 L546.0 459.0 Z"/><path d="M546.0 459.7 L547.2 459.0 L547.2 462.5 L546.0 463.2 Z"/><path d="M548.5 455.7 L550.7 454.4 L550.7 456.3 L548.5 457.6 Z"/><path d="M548.5 458.2 L550.7 457.0 L550.7 458.3 L548.5 459.5 Z"/><path d="M548.5 460.1 L550.7 458.9 L550.7 460.5 L548.5 461.7 Z"/><path d="M577.7 439.1 L580.1 437.7 L580.1 439.9 L577.7 441.2 Z"/><path d="M580.8 437.3 L583.2 436.0 L583.2 438.1 L580.8 439.4 Z"/><path d="M577.7 442.3 L578.5 441.8 L578.5 445.7 L577.7 446.1 Z"/><path d="M579.3 441.4 L580.1 440.9 L580.1 444.8 L579.3 445.2 Z"/><path d="M580.8 440.5 L581.6 440.1 L581.6 443.9 L580.8 444.4 Z"/><path d="M582.4 439.7 L583.2 439.2 L583.2 443.1 L582.4 443.5 Z"/><path d="M569.5 443.7 L570.6 443.1 L570.6 445.0 L569.5 445.7 Z"/><path d="M569.5 446.4 L570.6 445.8 L570.6 449.4 L569.5 450.0 Z"/><path d="M566.1 445.7 L568.2 444.5 L568.2 446.4 L566.1 447.6 Z"/><path d="M566.1 448.3 L568.2 447.1 L568.2 448.4 L566.1 449.6 Z"/><path d="M566.1 450.2 L568.2 449.0 L568.2 450.7 L566.1 451.9 Z"/><path d="M532.0 478.9 L534.7 477.4 L534.7 479.4 L532.0 480.9 Z"/><path d="M535.6 476.9 L538.3 475.5 L538.3 477.5 L535.6 479.0 Z"/><path d="M532.0 481.9 L532.9 481.4 L532.9 485.0 L532.0 485.5 Z"/><path d="M533.8 481.0 L534.8 480.4 L534.8 484.1 L533.8 484.6 Z"/><path d="M535.6 480.0 L536.5 479.5 L536.5 483.1 L535.6 483.6 Z"/><path d="M537.3 479.0 L538.3 478.5 L538.3 482.2 L537.3 482.7 Z"/><path d="M546.0 471.2 L547.2 470.6 L547.2 472.5 L546.0 473.1 Z"/><path d="M546.0 473.9 L547.2 473.2 L547.2 476.7 L546.0 477.3 Z"/><path d="M548.5 469.9 L550.7 468.7 L550.7 470.6 L548.5 471.8 Z"/><path d="M548.5 472.5 L550.7 471.3 L550.7 472.5 L548.5 473.7 Z"/><path d="M548.5 474.3 L550.7 473.1 L550.7 474.7 L548.5 475.9 Z"/><path d="M577.7 453.8 L580.1 452.6 L580.1 454.7 L577.7 456.0 Z"/><path d="M580.8 452.1 L583.2 450.9 L583.2 453.0 L580.8 454.3 Z"/><path d="M577.7 457.1 L578.5 456.6 L578.5 460.5 L577.7 460.9 Z"/><path d="M579.3 456.2 L580.1 455.8 L580.1 459.6 L579.3 460.1 Z"/><path d="M580.8 455.4 L581.6 454.9 L581.6 458.8 L580.8 459.2 Z"/><path d="M582.4 454.5 L583.2 454.1 L583.2 458.0 L582.4 458.4 Z"/><path d="M569.5 458.3 L570.6 457.7 L570.6 459.7 L569.5 460.3 Z"/><path d="M569.5 461.1 L570.6 460.5 L570.6 464.0 L569.5 464.6 Z"/><path d="M566.1 460.2 L568.2 459.1 L568.2 461.0 L566.1 462.2 Z"/><path d="M566.1 462.9 L568.2 461.7 L568.2 463.0 L566.1 464.1 Z"/><path d="M566.1 464.7 L568.2 463.6 L568.2 465.3 L566.1 466.4 Z"/><path d="M532.0 492.8 L534.7 491.4 L534.7 493.4 L532.0 494.8 Z"/><path d="M535.6 490.9 L538.3 489.5 L538.3 491.5 L535.6 492.9 Z"/><path d="M532.0 495.8 L532.9 495.3 L532.9 499.0 L532.0 499.4 Z"/><path d="M533.8 494.9 L534.8 494.4 L534.8 498.0 L533.8 498.5 Z"/><path d="M535.6 494.0 L536.5 493.5 L536.5 497.1 L535.6 497.6 Z"/><path d="M537.3 493.0 L538.3 492.6 L538.3 496.2 L537.3 496.7 Z"/><path d="M546.0 485.4 L547.2 484.8 L547.2 486.7 L546.0 487.3 Z"/><path d="M546.0 488.0 L547.2 487.4 L547.2 490.9 L546.0 491.5 Z"/><path d="M548.5 484.1 L550.7 482.9 L550.7 484.8 L548.5 486.0 Z"/><path d="M548.5 486.7 L550.7 485.5 L550.7 486.8 L548.5 487.9 Z"/><path d="M548.5 488.5 L550.7 487.4 L550.7 489.0 L548.5 490.2 Z"/><path d="M577.7 468.6 L580.1 467.4 L580.1 469.5 L577.7 470.8 Z"/><path d="M580.8 467.0 L583.2 465.7 L583.2 467.9 L580.8 469.1 Z"/><path d="M577.7 471.9 L578.5 471.4 L578.5 475.3 L577.7 475.7 Z"/><path d="M579.3 471.0 L580.1 470.6 L580.1 474.5 L579.3 474.9 Z"/><path d="M580.8 470.2 L581.6 469.8 L581.6 473.7 L580.8 474.1 Z"/><path d="M582.4 469.4 L583.2 469.0 L583.2 472.9 L582.4 473.3 Z"/><path d="M569.5 473.0 L570.6 472.4 L570.6 474.3 L569.5 474.9 Z"/><path d="M569.5 475.7 L570.6 475.1 L570.6 478.7 L569.5 479.3 Z"/><path d="M566.1 474.8 L568.2 473.7 L568.2 475.6 L566.1 476.7 Z"/><path d="M566.1 477.4 L568.2 476.3 L568.2 477.6 L566.1 478.7 Z"/><path d="M566.1 479.3 L568.2 478.2 L568.2 479.9 L566.1 481.0 Z"/><path d="M532.0 506.7 L534.7 505.3 L534.7 507.3 L532.0 508.7 Z"/><path d="M535.6 504.9 L538.3 503.5 L538.3 505.5 L535.6 506.9 Z"/><path d="M532.0 509.7 L532.9 509.3 L532.9 512.9 L532.0 513.3 Z"/><path d="M533.8 508.8 L534.8 508.3 L534.8 512.0 L533.8 512.4 Z"/><path d="M535.6 507.9 L536.5 507.5 L536.5 511.1 L535.6 511.5 Z"/><path d="M537.3 507.0 L538.3 506.6 L538.3 510.2 L537.3 510.7 Z"/><path d="M546.0 499.6 L547.2 499.0 L547.2 500.9 L546.0 501.5 Z"/><path d="M546.0 502.2 L547.2 501.6 L547.2 505.1 L546.0 505.7 Z"/><path d="M548.5 498.3 L550.7 497.2 L550.7 499.1 L548.5 500.2 Z"/><path d="M548.5 500.9 L550.7 499.8 L550.7 501.0 L548.5 502.2 Z"/><path d="M548.5 502.7 L550.7 501.6 L550.7 503.3 L548.5 504.4 Z"/><path d="M577.7 483.4 L580.1 482.2 L580.1 484.4 L577.7 485.6 Z"/><path d="M580.8 481.8 L583.2 480.6 L583.2 482.8 L580.8 484.0 Z"/><path d="M577.7 486.7 L578.5 486.2 L578.5 490.1 L577.7 490.5 Z"/><path d="M579.3 485.9 L580.1 485.4 L580.1 489.3 L579.3 489.7 Z"/><path d="M580.8 485.1 L581.6 484.7 L581.6 488.5 L580.8 488.9 Z"/><path d="M582.4 484.3 L583.2 483.9 L583.2 487.8 L582.4 488.2 Z"/><path d="M569.5 487.6 L570.6 487.0 L570.6 489.0 L569.5 489.6 Z"/><path d="M569.5 490.3 L570.6 489.8 L570.6 493.3 L569.5 493.9 Z"/><path d="M566.1 489.3 L568.2 488.3 L568.2 490.2 L566.1 491.3 Z"/><path d="M566.1 492.0 L568.2 490.9 L568.2 492.2 L566.1 493.3 Z"/><path d="M566.1 493.9 L568.2 492.8 L568.2 494.5 L566.1 495.5 Z"/><path d="M532.0 520.6 L534.7 519.3 L534.7 521.3 L532.0 522.6 Z"/><path d="M535.6 518.8 L538.3 517.5 L538.3 519.5 L535.6 520.8 Z"/><path d="M532.0 523.6 L532.9 523.2 L532.9 526.8 L532.0 527.2 Z"/><path d="M533.8 522.7 L534.8 522.3 L534.8 525.9 L533.8 526.3 Z"/><path d="M535.6 521.9 L536.5 521.4 L536.5 525.1 L535.6 525.5 Z"/><path d="M537.3 521.0 L538.3 520.6 L538.3 524.2 L537.3 524.7 Z"/><path d="M546.0 513.7 L547.2 513.2 L547.2 515.0 L546.0 515.6 Z"/><path d="M546.0 516.4 L547.2 515.8 L547.2 519.2 L546.0 519.8 Z"/><path d="M548.5 512.5 L550.7 511.5 L550.7 513.4 L548.5 514.4 Z"/><path d="M548.5 515.1 L550.7 514.0 L550.7 515.3 L548.5 516.4 Z"/><path d="M548.5 517.0 L550.7 515.9 L550.7 517.5 L548.5 518.6 Z"/><path d="M577.7 498.2 L580.1 497.1 L580.1 499.2 L577.7 500.4 Z"/><path d="M580.8 496.7 L583.2 495.5 L583.2 497.7 L580.8 498.8 Z"/><path d="M577.7 501.4 L578.5 501.1 L578.5 504.9 L577.7 505.3 Z"/><path d="M579.3 500.7 L580.1 500.3 L580.1 504.1 L579.3 504.5 Z"/><path d="M580.8 499.9 L581.6 499.5 L581.6 503.4 L580.8 503.8 Z"/><path d="M582.4 499.2 L583.2 498.8 L583.2 502.7 L582.4 503.0 Z"/><path d="M569.5 502.2 L570.6 501.7 L570.6 503.6 L569.5 504.2 Z"/><path d="M569.5 504.9 L570.6 504.4 L570.6 508.0 L569.5 508.5 Z"/><path d="M566.1 503.9 L568.2 502.9 L568.2 504.8 L566.1 505.8 Z"/><path d="M566.1 506.5 L568.2 505.5 L568.2 506.8 L566.1 507.8 Z"/><path d="M566.1 508.4 L568.2 507.4 L568.2 509.1 L566.1 510.1 Z"/></g><g fill="#a9aca5"><path d="M484.9 497.7 L486.4 496.8 L486.4 501.5 L484.9 502.4 Z"/><path d="M484.9 510.7 L486.4 509.8 L486.4 514.5 L484.9 515.3 Z"/><path d="M484.9 523.6 L486.4 522.8 L486.4 527.5 L484.9 528.3 Z"/><path d="M484.9 536.6 L486.4 535.8 L486.4 540.5 L484.9 541.3 Z"/><path d="M484.9 549.6 L486.4 548.8 L486.4 553.5 L484.9 554.2 Z"/><path d="M551.4 460.5 L552.7 459.8 L552.7 464.9 L551.4 465.6 Z"/><path d="M551.4 474.8 L552.7 474.1 L552.7 479.2 L551.4 479.9 Z"/><path d="M551.4 489.1 L552.7 488.4 L552.7 493.5 L551.4 494.2 Z"/><path d="M551.4 503.3 L552.7 502.7 L552.7 507.8 L551.4 508.5 Z"/><path d="M551.4 517.6 L552.7 517.0 L552.7 522.1 L551.4 522.7 Z"/><path d="M486.9 496.5 L488.5 495.7 L488.5 500.4 L486.9 501.2 Z"/><path d="M486.9 509.6 L488.5 508.7 L488.5 513.4 L486.9 514.2 Z"/><path d="M486.9 522.6 L488.5 521.7 L488.5 526.4 L486.9 527.2 Z"/><path d="M486.9 535.6 L488.5 534.8 L488.5 539.5 L486.9 540.2 Z"/><path d="M486.9 548.6 L488.5 547.8 L488.5 552.5 L486.9 553.3 Z"/><path d="M553.1 459.6 L554.4 458.8 L554.4 464.0 L553.1 464.7 Z"/><path d="M553.1 473.9 L554.4 473.2 L554.4 478.3 L553.1 479.0 Z"/><path d="M553.1 488.2 L554.4 487.5 L554.4 492.6 L553.1 493.3 Z"/><path d="M553.1 502.5 L554.4 501.8 L554.4 507.0 L553.1 507.6 Z"/><path d="M553.1 516.8 L554.4 516.2 L554.4 521.3 L553.1 521.9 Z"/></g><g fill="#5e5e5e"><path d="M493.2 484.8 L493.8 484.5 L493.8 497.7 L493.2 498.0 Z"/><path d="M493.2 498.0 L493.8 497.7 L493.8 510.8 L493.2 511.1 Z"/><path d="M493.2 511.1 L493.8 510.8 L493.8 523.9 L493.2 524.2 Z"/><path d="M493.2 524.2 L493.8 523.9 L493.8 537.1 L493.2 537.4 Z"/><path d="M493.2 537.4 L493.8 537.1 L493.8 550.2 L493.2 550.5 Z"/><path d="M558.3 447.7 L558.8 447.4 L558.8 461.8 L558.3 462.1 Z"/><path d="M558.3 462.1 L558.8 461.8 L558.8 476.2 L558.3 476.5 Z"/><path d="M558.3 476.5 L558.8 476.2 L558.8 490.6 L558.3 490.9 Z"/><path d="M558.3 490.9 L558.8 490.6 L558.8 505.1 L558.3 505.3 Z"/><path d="M558.3 505.3 L558.8 505.1 L558.8 519.5 L558.3 519.7 Z"/></g><path d="M455 506.6 L587.3 431.0 L587.3 506 L455 568.6 Z" fill="#7a7c77" fill-opacity="0.3"/><path d="M412.5 483.2 L455 506.6 L455 568.6 L412.5 555.4 Z" fill="#5f5f5c"/><g fill="#5e6867"><path d="M412.8 483.5 L453.8 506.0 L453.8 507.6 L412.8 485.3 Z"/><path d="M412.8 498.0 L453.8 518.5 L453.8 520.1 L412.8 499.8 Z"/><path d="M412.8 512.4 L453.8 531.0 L453.8 532.5 L412.8 514.2 Z"/><path d="M412.8 526.8 L453.8 543.4 L453.8 545.0 L412.8 528.6 Z"/><path d="M412.8 541.2 L453.8 555.9 L453.8 557.5 L412.8 543.0 Z"/></g><g fill="#5c3a2f"><path d="M412.8 485.7 L417.3 488.1 L417.3 495.4 L412.8 493.1 Z"/><path d="M417.9 488.5 L453.7 507.9 L453.7 514.3 L417.9 495.7 Z"/><path d="M412.8 500.2 L417.3 502.4 L417.3 509.6 L412.8 507.5 Z"/><path d="M417.9 502.7 L453.7 520.4 L453.7 526.7 L417.9 509.9 Z"/><path d="M412.8 514.6 L417.3 516.6 L417.3 523.8 L412.8 521.9 Z"/><path d="M417.9 516.9 L453.7 532.8 L453.7 539.2 L417.9 524.1 Z"/><path d="M412.8 529.0 L417.3 530.8 L417.3 538.0 L412.8 536.4 Z"/><path d="M417.9 531.0 L453.7 545.3 L453.7 551.7 L417.9 538.3 Z"/><path d="M412.8 543.4 L417.3 545.0 L417.3 552.2 L412.8 550.8 Z"/><path d="M417.9 545.2 L453.7 557.8 L453.7 564.1 L417.9 552.5 Z"/></g><g fill="#94685a"><path d="M412.8 487.3 L417.3 489.7 L417.3 493.8 L412.8 491.5 Z"/><path d="M417.9 490.1 L453.7 509.3 L453.7 512.9 L417.9 494.1 Z"/><path d="M412.8 501.8 L417.3 503.9 L417.3 508.0 L412.8 505.9 Z"/><path d="M417.9 504.3 L453.7 521.8 L453.7 525.3 L417.9 508.3 Z"/><path d="M412.8 516.2 L417.3 518.2 L417.3 522.2 L412.8 520.3 Z"/><path d="M417.9 518.5 L453.7 534.2 L453.7 537.8 L417.9 522.5 Z"/><path d="M412.8 530.6 L417.3 532.4 L417.3 536.4 L412.8 534.7 Z"/><path d="M417.9 532.6 L453.7 546.7 L453.7 550.3 L417.9 536.7 Z"/><path d="M412.8 545.1 L417.3 546.6 L417.3 550.7 L412.8 549.2 Z"/><path d="M417.9 546.8 L453.7 559.2 L453.7 562.7 L417.9 550.9 Z"/></g><g fill="#ad8271"><path d="M412.8 488.7 L417.3 491.0 L417.3 492.6 L412.8 490.3 Z"/><path d="M417.9 491.4 L453.7 510.4 L453.7 511.8 L417.9 493.0 Z"/><path d="M412.8 503.1 L417.3 505.3 L417.3 506.8 L412.8 504.7 Z"/><path d="M417.9 505.6 L453.7 522.9 L453.7 524.3 L417.9 507.2 Z"/><path d="M412.8 517.5 L417.3 519.5 L417.3 521.1 L412.8 519.1 Z"/><path d="M417.9 519.8 L453.7 535.4 L453.7 536.8 L417.9 521.3 Z"/><path d="M412.8 532.0 L417.3 533.7 L417.3 535.3 L412.8 533.6 Z"/><path d="M417.9 533.9 L453.7 547.8 L453.7 549.2 L417.9 535.5 Z"/><path d="M412.8 546.4 L417.3 547.9 L417.3 549.5 L412.8 548.0 Z"/><path d="M417.9 548.1 L453.7 560.3 L453.7 561.7 L417.9 549.7 Z"/></g><g fill="#8c866f" filter="url(#fstone3)"><path d="M412.8 493.9 L417.3 496.2 L417.3 499.9 L412.8 497.6 Z"/><path d="M417.9 496.5 L453.7 514.9 L453.7 518.2 L417.9 500.2 Z"/><path d="M412.8 508.3 L417.3 510.4 L417.3 514.1 L412.8 512.1 Z"/><path d="M417.9 510.7 L453.7 527.4 L453.7 530.7 L417.9 514.4 Z"/><path d="M412.8 522.7 L417.3 524.6 L417.3 528.3 L412.8 526.5 Z"/><path d="M417.9 524.9 L453.7 539.9 L453.7 543.1 L417.9 528.6 Z"/><path d="M412.8 537.2 L417.3 538.8 L417.3 542.5 L412.8 540.9 Z"/><path d="M417.9 539.1 L453.7 552.4 L453.7 555.6 L417.9 542.7 Z"/><path d="M412.8 551.6 L417.3 553.0 L417.3 556.7 L412.8 555.3 Z"/><path d="M417.9 553.2 L453.7 564.8 L453.7 568.1 L417.9 556.9 Z"/></g><g fill="#7e807b"><path d="M453.9 506.2 L455.0 506.9 L455.0 568.4 L453.9 568.1 Z"/></g><path d="M412.9 483.2 L412.9 555.4" stroke="#6b6b68" stroke-width="1"/></g><!--GEN_VP4END-->
<!--GEN_OVLSTART--><defs><linearGradient id="gcube" x1="0" y1="0" x2="1" y2="0"><stop offset="0" stop-color="#e8e8e8"/><stop offset="0.45" stop-color="#cfcfcf"/><stop offset="1" stop-color="#e2e2e2"/></linearGradient><linearGradient id="gcube2" x1="0" y1="0" x2="0" y2="1"><stop offset="0" stop-color="#d2d2d2"/><stop offset="1" stop-color="#ebebeb"/></linearGradient><filter id="fblur" x="-10%" y="-10%" width="120%" height="120%"><feGaussianBlur stdDeviation="0.7"/></filter></defs><g id="ovl"><g><path d="M22.4 379.6 V366.6" stroke="#00cc00" stroke-width="1.1"/><path d="M21.4 371.1 h1 v-4 h1 v4 z" fill="#00cc00"/><rect x="21.2" y="369.6" width="2.2" height="2.500" fill="#00c800"/><path d="M22.4 379.6 H31.4" stroke="#6a1818" stroke-width="1.1"/><path d="M30.9 379.6 h3.500 l1.500 -1" stroke="#e01818" stroke-width="1.3" fill="none"/><text x="23.2" y="365.6" font-family="Liberation Sans, sans-serif" font-size="5.500" font-weight="bold" fill="#00d000">Y</text><text x="34.9" y="378.6" font-family="Liberation Sans, sans-serif" font-size="5.500" font-weight="bold" fill="#e01818">X</text><text x="23.4" y="378.6" font-family="Liberation Sans, sans-serif" font-size="5.500" font-weight="bold" fill="#1878e0">Z</text><rect x="21.099999999999998" y="378.6" width="2.400" height="2.200" fill="#0c2c66"/></g><g><path d="M355.3 380.2 V367.2" stroke="#00cc00" stroke-width="1.1"/><path d="M354.3 371.7 h1 v-4 h1 v4 z" fill="#00cc00"/><rect x="354.1" y="370.2" width="2.2" height="2.500" fill="#00c800"/><path d="M355.3 380.2 H364.3" stroke="#6a1818" stroke-width="1.1"/><path d="M363.8 380.2 h3.500 l1.500 -1" stroke="#e01818" stroke-width="1.3" fill="none"/><text x="356.1" y="366.2" font-family="Liberation Sans, sans-serif" font-size="5.500" font-weight="bold" fill="#00d000">Y</text><text x="367.8" y="379.2" font-family="Liberation Sans, sans-serif" font-size="5.500" font-weight="bold" fill="#e01818">X</text><text x="356.3" y="379.2" font-family="Liberation Sans, sans-serif" font-size="5.500" font-weight="bold" fill="#1878e0">Z</text><rect x="354.0" y="379.2" width="2.400" height="2.200" fill="#0c2c66"/></g><g><path d="M22.5 555.3 V542.3" stroke="#00cc00" stroke-width="1.1"/><path d="M21.5 546.8 h1 v-4 h1 v4 z" fill="#00cc00"/><rect x="21.3" y="545.3" width="2.2" height="2.500" fill="#00c800"/><path d="M22.5 555.3 H31.5" stroke="#6a1818" stroke-width="1.1"/><path d="M31.0 555.3 h3.500 l1.500 -1" stroke="#e01818" stroke-width="1.3" fill="none"/><text x="23.3" y="541.3" font-family="Liberation Sans, sans-serif" font-size="5.500" font-weight="bold" fill="#00d000">Y</text><text x="35.0" y="554.3" font-family="Liberation Sans, sans-serif" font-size="5.500" font-weight="bold" fill="#e01818">X</text><text x="23.5" y="554.3" font-family="Liberation Sans, sans-serif" font-size="5.500" font-weight="bold" fill="#1878e0">Z</text><rect x="21.2" y="554.3" width="2.400" height="2.200" fill="#0c2c66"/></g><g><path d="M355.5 555.2 V545.2" stroke="#00cc00" stroke-width="1.2"/><rect x="354.2" y="545.2" width="2.400" height="3" fill="#00c800"/><path d="M355.5 555.2 L360.5 552.2" stroke="#8a1010" stroke-width="1.1"/><path d="M360.0 552.2 l3 -1.700" stroke="#b01010" stroke-width="2"/><path d="M355.5 555.2 L361.5 558.2" stroke="#1a4a9a" stroke-width="1.1"/><path d="M361.0 558.0 l3 1.400" stroke="#163a7a" stroke-width="2"/><text x="357.0" y="543.0" font-family="Liberation Sans, sans-serif" font-size="6" font-weight="bold" fill="#00d000">Y</text><text x="365.5" y="548.2" font-family="Liberation Sans, sans-serif" font-size="6" font-weight="bold" fill="#e01818">X</text><text x="366.0" y="557.4000000000001" font-family="Liberation Mono, monospace" font-size="6" font-weight="bold" fill="#1878e0">I</text><rect x="354.5" y="554.4000000000001" width="2" height="1.800" fill="#0c2c66"/></g><rect x="307" y="238.200" width="14.800" height="14.600" fill="#dadada" fill-opacity="0.78" stroke="#8a8a8a" stroke-width="0.9"/><path d="M296 254.500 H332" stroke="#c9c9c9" stroke-width="0.8"/><path d="M298.500 254 l2 -1 M325 253.500 l3 1" stroke="#8a8a8a" stroke-width="0.6"/><rect x="303.5" y="272.6" width="19.100000000000023" height="5.599999999999966" rx="2.799999999999983" fill="#e4e8ef" fill-opacity="0.75"/><path d="M311.3 273.8 L318.2 273.8 L314.7 277.8 Z" fill="#eef0f4" fill-opacity="0.6" stroke="#9a9a9a" stroke-width="0.7"/><rect x="640.700" y="270.600" width="14.600" height="14.600" fill="url(#gcube)" stroke="#929292" stroke-width="1.3"/><path d="M630 286.700 H666" stroke="#cfcfcf" stroke-width="0.7"/><path d="M643.500 287.600 H653" stroke="#a8a8a8" stroke-width="0.8"/><path d="M633.500 286.200 l2.500 -1 M660 285.200 l2.500 1" stroke="#8a8a8a" stroke-width="0.6"/><rect x="637.5" y="303.5" width="19.899999999999977" height="8.199999999999989" rx="4.099999999999994" fill="#e4e8ef" fill-opacity="0.75"/><path d="M644.5 305.3 L653 305.3 L648.7 310 Z" fill="#eef0f4" fill-opacity="0.6" stroke="#9a9a9a" stroke-width="0.7"/><circle cx="314" cy="420.500" r="14.900" fill="none" stroke="#e4e4e4" stroke-width="2.300"/><circle cx="314" cy="420.500" r="13.700" fill="none" stroke="#6e6e6e" stroke-width="0.6"/><rect x="306.600" y="413.600" width="14.700" height="14.500" fill="url(#gcube2)" stroke="#8a8a8a" stroke-width="1.2"/><path d="M314 402 V407" stroke="#555" stroke-width="0.8"/><path d="M298.500 420 v3 M329 419 l1.500 2" stroke="#999" stroke-width="0.8"/><rect x="303" y="447" width="19" height="6.600000000000023" rx="3.3000000000000114" fill="#e4e8ef" fill-opacity="0.75"/><path d="M310 448.4 L319 448.4 L314.5 453 Z" fill="#eef0f4" fill-opacity="0.6" stroke="#9a9a9a" stroke-width="0.7"/><ellipse cx="648" cy="428.300" rx="15.500" ry="9.300" fill="none" stroke="#e2e2e2" stroke-width="2.400"/><path d="M637.400 415 L648 410.400 L658.800 415 L648 420.400 Z" fill="#e2e2e2" stroke="#8a8a8a" stroke-width="0.7"/><path d="M637.400 415 L648 420.400 L648 432.400 L637.400 427 Z" fill="url(#gcube)" stroke="#8a8a8a" stroke-width="0.7"/><path d="M658.800 415 L648 420.400 L648 432.400 L658.800 427 Z" fill="#f1f1f1" stroke="#8a8a8a" stroke-width="0.7"/><path d="M633 434 l2.500 -1.500 M659 420 l2 -1.500 M660.500 434.500 l1.500 1" stroke="#9a9a9a" stroke-width="0.7"/><rect x="637.8" y="446.4" width="19.0" height="7.300000000000011" rx="3.6500000000000057" fill="#e4e8ef" fill-opacity="0.75"/><path d="M643.5 448 L653 448 L648.3 453 Z" fill="#eef0f4" fill-opacity="0.6" stroke="#9a9a9a" stroke-width="0.7"/><rect x="612.200" y="236.200" width="11.400" height="4" rx="0.8" fill="#eaeaea" stroke="#555" stroke-width="1.1"/><rect x="634.800" y="230.200" width="9" height="8.600" rx="0.8" fill="#f4f4f4" stroke="#555" stroke-width="0.9"/><rect x="632.300" y="232.600" width="9" height="8.800" rx="0.8" fill="#f0f0f0" stroke="#555" stroke-width="0.9"/><rect x="635.300" y="235.500" width="3.200" height="3.200" fill="#bdbdbd" stroke="#555" stroke-width="0.8"/><path d="M652.300 231.500 L655.500 231.500 L657.700 234.200 L660 231.500 L663.200 231.500 L659.400 236 L663.200 240.500 L660 240.500 L657.700 237.800 L655.500 240.500 L652.300 240.500 L656 236 Z" fill="#f0f0f0" stroke="#444" stroke-width="1.3"/></g><!--GEN_OVLEND-->
<!--GEN_BOTSTART--><g id="botbar"><rect x="7.5" y="572.500" width="13" height="12.500" fill="#e3e3e3" stroke="#fafafa" stroke-width="1"/><rect x="21.5" y="572.500" width="13" height="12.500" fill="#e3e3e3" stroke="#fafafa" stroke-width="1"/><rect x="35.5" y="572.500" width="13" height="12.500" fill="#e3e3e3" stroke="#fafafa" stroke-width="1"/><rect x="49.5" y="572.500" width="13" height="12.500" fill="#e3e3e3" stroke="#fafafa" stroke-width="1"/><rect x="10.300" y="574.500" width="1.500" height="9" fill="#6e6e6e"/><path d="M17.800 574.500 V583.500 L12 579 Z" fill="#6e6e6e"/><path d="M31.800 574.500 V583.500 L26 579 Z" fill="#6e6e6e"/><path d="M38.700 574.500 V583.500 L44.500 579 Z" fill="#6e6e6e"/><path d="M52.200 574.500 V583.500 L58 579 Z" fill="#6e6e6e"/><rect x="58.300" y="574.500" width="1.500" height="9" fill="#6e6e6e"/><path d="M64 571.500 L68.800 585.500 L104.200 585.500 L109.500 571.500 Z" fill="#fffff4"/><path d="M64 571.500 L68.800 585.500" stroke="#333" stroke-width="0.9" fill="none"/><path d="M109.500 571.500 L104.200 585.500 M154 571.500 L149.500 585.500 H147.500 M200.600 571.500 L196 585.500 H194 M104.200 585.500 H102.500" stroke="#333" stroke-width="0.9" fill="none"/><path d="M109.500 571.700 H670" stroke="#c8c8c8" stroke-width="0.6"/></g><!--GEN_BOTEND-->
<!--GEN_BLOBSTART--><g id="blob" filter="url(#fblur)"><circle cx="581" cy="520.500" r="4.500" fill="#fff" stroke="#dcdcdc" stroke-width="1"/><circle cx="590.500" cy="520" r="4.500" fill="#fff" stroke="#dcdcdc" stroke-width="1"/><circle cx="573" cy="524.500" r="3" fill="#fff" stroke="#e0e0e0" stroke-width="0.8"/><circle cx="638" cy="536" r="4" fill="#fff" stroke="#d8d8d8" stroke-width="1"/><rect x="521.600" y="532" width="19" height="7.500" fill="#a9a99d"/><rect x="540.600" y="528.500" width="17.600" height="11" fill="#a9a9a9"/><rect x="558.200" y="526.500" width="18" height="13" fill="#e2e2e2"/><rect x="576.200" y="526.500" width="30" height="13" fill="#efefef"/><ellipse cx="617" cy="533" rx="12" ry="9" fill="#f3f3f3"/><rect x="606" y="531" width="42" height="9" fill="#f1f1f1"/><path d="M513 539.500 H522 V552 L518 549 Z" fill="#b9b9ab"/><rect x="521.600" y="539.300" width="126" height="19" fill="#f2f2f2"/><rect x="521.600" y="539.300" width="37" height="19" fill="#f6f6f6"/><path d="M519.500 557.500 H668 L670 558 L604 569 L596 572 L560 576.500 L546 577 L532 573 L524 566 Z" fill="#d9d9d9"/><path d="M558 557.500 H612 V568 L596 572 L560 576.500 L558 576.500 Z" fill="#cdcdcd"/><path d="M540 557.500 H558 V576.500 L546 577 L540 575 Z" fill="#d4d4d4"/><path d="M612 557.500 H668 L640 563.500 L612 568 Z" fill="#e0e0e0"/><path d="M619.500 562 H639.500 V576 C639.500 586.500 619.500 586.500 619.500 576 Z" fill="#c4c4c4"/><path d="M622 575 H639.500 V576 C639.500 586.500 622 586 620.500 578 Z" fill="#b4b4b4"/></g><!--GEN_BLOBEND-->
<!-- A button -->
<g id="ic-a">
<rect x="5.5" y="70.5" width="40" height="40" fill="url(#gA)" stroke="#3f3f3f"/>
<rect x="6.5" y="71.5" width="38" height="38" fill="none" stroke="#e8e8e8" stroke-opacity="0.7"/>
<path d="M6 95 C14 80 30 78 45 80 L45 110 L6 110 Z" fill="#8a8a8a" fill-opacity="0.55"/>
<path d="M10 103.500 L12 105 L18 104.300 L18.500 101 L24 99 L25.500 101.500 L33 98.500 L31.500 96 Z" fill="#7d0c12"/>
<path d="M17.200 97.300 L22.800 95.600 L25 100.500 L18 103.600 Z" fill="#8d0f14"/>
<path d="M13.800 74.500 L19.500 74 L32.500 97.500 L25 100.500 L22.800 95.600 L17.200 97.300 L17.500 103 L10 103.800 Z" fill="#e21c26"/>
<path d="M13.800 74.500 L19.500 74 L23.200 81 L11.600 96 Z" fill="#f09a9c"/>
<path d="M17.800 86.500 L20.300 85 L22.300 90.500 L17.500 92 Z" fill="#9c1218"/>
<path d="M17.200 97.300 L22.800 95.600 L25 100.500 L24 101 L22 97.500 L18.400 98.600 L18.500 103 L17.500 103 Z" fill="#a8141b"/>
<path d="M35 89 L42.4 89 L38.7 93 Z" fill="#fff"/>
<path d="M35 88 L42.4 88 L38.7 92.3 Z" fill="#2b3140"/>
</g>
<!-- QAT icons -->
<g id="ic-qat">
<path d="M54.5 76.5 L65.5 76.5 L69.5 80.5 L69.5 88.5 L54.5 88.5 Z" fill="url(#gw)" stroke="#2a2a2a"/>
<path d="M65.5 76.5 L65.5 80.5 L69.5 80.5" fill="#e8e8e8" stroke="#2a2a2a"/>
<path d="M77.5 86.5 L77.5 77.5 L82 77.5 L83.5 79 L89.5 79 L89.5 81.5" fill="#e4e6ea" stroke="#2a2a2a"/>
<path d="M77.5 86.5 L81.5 81.5 L92.5 81.5 L88.5 86.5 Z" fill="url(#gw)" stroke="#2a2a2a"/>
<rect x="101.500" y="74.5" width="13" height="13" rx="1" fill="#587582" stroke="#26323a"/>
<rect x="104" y="75" width="8" height="5.5" fill="#f4f4f4"/>
<rect x="104.5" y="82.500" width="7" height="5" fill="#f0f0f0"/>
<rect x="105.5" y="84" width="2" height="2.500" fill="#333"/>
<path d="M123 80 L130 74.500 L130 77.500 C136 77.500 138 80.500 137.500 86 C136 82.500 134 82 130 82.300 L130 85.500 Z" fill="#f4f4f4" stroke="#2a2a2a" stroke-width="0.8"/>
<path d="M143.800 80.500 L149 80.500 L146.400 83.500 Z" fill="#9a9a9a"/>
<path d="M170.500 80 L163.500 74.500 L163.500 77.500 C157.500 77.500 155.500 80.500 156 86 C157.500 82.500 159.500 82 163.500 82.300 L163.500 85.500 Z" fill="#e6e6e6" stroke="#9a9a9a" stroke-width="0.6"/>
<path d="M175.500 80.500 L180.700 80.500 L178.100 83.500 Z" fill="#a8a8a8"/>
<rect x="190.500" y="74.500" width="9" height="4" fill="#f4f4f4" stroke="#222"/>
<rect x="187.500" y="78.500" width="15" height="7" rx="1.500" fill="#f2f2f2" stroke="#222"/>
<rect x="190.500" y="83.500" width="9" height="4.500" fill="#fafafa" stroke="#222"/>
<rect x="209.300" y="77.300" width="7.900" height="1.900" fill="#000"/>
<path d="M209.300 80.300 L217.200 80.300 L213.250 84.500 Z" fill="#000"/>
</g>
<!-- info center icons -->
<g id="ic-info">
<path d="M412.500 74.500 L416 78 L412.500 81.500 Z" fill="#2d2d2d"/>
<path d="M425.500 74.500 L426.500 72 L430 71.500 L431 74.500 L431.300 85.300 L424.300 85.300 L424.300 78 Z" fill="#f4f4f4" stroke="#1e1e1e" stroke-width="0.9"/>
<path d="M438.200 74.500 L437.200 72 L433.700 71.500 L432.700 74.500 L432.400 85.300 L439.400 85.300 L439.400 78 Z" fill="#f4f4f4" stroke="#1e1e1e" stroke-width="0.9"/>
<rect x="430.300" y="75" width="3.100" height="3.500" fill="#cfcfcf" stroke="#1e1e1e" stroke-width="0.7"/>
<path d="M426 82.500 H430 M433.700 82.500 H437.700" stroke="#777" stroke-width="0.8"/>
<path d="M445 77 L450 77 L447.500 80 Z" fill="#333"/>
<circle cx="460.300" cy="74.300" r="4.400" fill="#f6f6f6" stroke="#1e1e1e" stroke-width="0.9"/>
<circle cx="459.200" cy="73.200" r="1.300" fill="#555"/>
<path d="M462.300 77.600 L464.600 75.600 L471.800 82.600 L471.800 85.300 L469.600 85.300 L468.800 83.500 L467.300 83.600 L467 82 L465.500 82 Z" fill="#f2f2f2" stroke="#1e1e1e" stroke-width="0.8"/>
<path d="M484 72.300 A6.200 6.200 0 0 0 493 81.300 Z" fill="#f6f6f6" stroke="#1e1e1e" stroke-width="0.8"/>
<path d="M488 77 L492.500 71.800" stroke="#f6f6f6" stroke-width="1.300"/><circle cx="492.800" cy="71.600" r="1" fill="#f6f6f6"/>
<path d="M487.300 81 L482.500 85.600 L494 85.600 L489.700 81.300 Z" fill="#f6f6f6" stroke="#1e1e1e" stroke-width="0.6"/>
<path d="M509.300 70.500 L511.300 76.300 L517.500 76.400 L512.500 80.100 L514.400 86 L509.300 82.400 L504.200 86 L506.100 80.100 L501.100 76.400 L507.300 76.300 Z" fill="#f6f6f6" stroke="#1c1c1c" stroke-width="0.9"/>
<circle cx="532.500" cy="78" r="7.300" fill="#f4f4f4" stroke="#222" stroke-width="0.9"/>
<text x="532.500" y="82.600" font-family="Liberation Sans, sans-serif" font-weight="bold" font-size="12.500" text-anchor="middle" fill="#2a2a2a">?</text>
<path d="M545.500 77 L550.500 77 L548 80 Z" fill="#2f2f2f"/>
</g>
<!-- window controls -->
<g id="ic-wc">
<rect x="584.500" y="72.500" width="11" height="4" rx="1" fill="#fff" stroke="#555"/>
<rect x="611.500" y="67.500" width="11" height="8.500" rx="1" fill="#fff" stroke="#555"/>
<rect x="614.500" y="70.500" width="5" height="2.500" fill="#dbe3ed" stroke="#555"/>
<path d="M648 68 L651.500 68 L654 70.500 L656.500 68 L660 68 L656 72 L660 76.500 L656.500 76.500 L654 74 L651.500 76.500 L648 76.500 L652 72 Z" fill="#fff" stroke="#555" stroke-width="0.9"/>
<path d="M603.500 63 L603.500 81 M630.500 63 L630.500 81" stroke="#a3acb8"/><path d="M604.500 63 L604.500 80 M631.500 63 L631.500 80" stroke="#f4f7fa"/>
</g>
<defs><linearGradient id="gb" x1="0" y1="0" x2="0" y2="1"><stop offset="0" stop-color="#fcfcfc"/><stop offset="1" stop-color="#ebebeb"/></linearGradient><linearGradient id="grect" x1="0" y1="0" x2="0" y2="1"><stop offset="0" stop-color="#f4f6f8"/><stop offset="1" stop-color="#c9ced6"/></linearGradient><pattern id="hatch" width="2.2" height="2.2" patternUnits="userSpaceOnUse" patternTransform="rotate(45)"><rect width="1.1" height="2.2" fill="#555"/></pattern></defs><g id="ic-draw"><path d="M19.8 148.8 L46.1 122.7" stroke="#444" stroke-width="1.4"/><rect x="18.1" y="147.10000000000002" width="3.4" height="3.4" fill="#fff" stroke="#333" stroke-width="0.9"/><rect x="44.4" y="121.0" width="3.4" height="3.4" fill="#fff" stroke="#333" stroke-width="0.9"/><rect x="57.5" y="119.5" width="31" height="21" fill="url(#gb)" stroke="#d6d6d6"/><path d="M78.5 120 V140" stroke="#d6d6d6"/><rect x="93.5" y="119.5" width="21" height="21" fill="url(#gb)" stroke="#d6d6d6"/><path d="M80.8 128.3 L86.2 128.3 L83.5 131.5 Z" fill="#333"/><rect x="57.5" y="143.5" width="31" height="21" fill="url(#gb)" stroke="#d6d6d6"/><path d="M78.5 144 V164" stroke="#d6d6d6"/><rect x="93.5" y="143.5" width="21" height="21" fill="url(#gb)" stroke="#d6d6d6"/><path d="M80.8 152.3 L86.2 152.3 L83.5 155.5 Z" fill="#333"/><rect x="57.5" y="167.5" width="31" height="21" fill="url(#gb)" stroke="#d6d6d6"/><path d="M78.5 168 V188" stroke="#d6d6d6"/><rect x="93.5" y="167.5" width="21" height="21" fill="url(#gb)" stroke="#d6d6d6"/><path d="M80.8 176.3 L86.2 176.3 L83.5 179.5 Z" fill="#333"/><path d="M60.5 136 C61.5 129 66 124.500 73.500 123.500" fill="none" stroke="#333" stroke-width="1.1"/><rect x="59.0" y="134.5" width="3.0" height="3.0" fill="#fff" stroke="#333" stroke-width="0.9"/><rect x="63.099999999999994" y="126.1" width="3.0" height="3.0" fill="#fff" stroke="#333" stroke-width="0.9"/><rect x="72.0" y="122.0" width="3.0" height="3.0" fill="#fff" stroke="#333" stroke-width="0.9"/><path d="M96.500 134.500 L103.500 134.500 M103.500 126 C113 125 113 135.500 103.500 134.500" fill="none" stroke="#333" stroke-width="1.1"/><rect x="95.0" y="133.0" width="3.0" height="3.0" fill="#fff" stroke="#333" stroke-width="0.9"/><rect x="102.0" y="133.0" width="3.0" height="3.0" fill="#fff" stroke="#333" stroke-width="0.9"/><rect x="102.0" y="124.5" width="3.0" height="3.0" fill="#fff" stroke="#333" stroke-width="0.9"/><circle cx="66.600" cy="153.400" r="7.200" fill="url(#grect)" stroke="#333" stroke-width="1.1"/><path d="M66.600 153.400 L71.600 148.200" stroke="#333" stroke-width="1"/><rect x="65.3" y="152.1" width="2.6" height="2.6" fill="#fff" stroke="#333" stroke-width="0.9"/><rect x="96.500" y="149.500" width="13" height="9" fill="url(#grect)" stroke="#333" stroke-width="1.1"/><rect x="108.0" y="148.0" width="3.0" height="3.0" fill="#fff" stroke="#333" stroke-width="0.9"/><rect x="95.0" y="157.0" width="3.0" height="3.0" fill="#fff" stroke="#333" stroke-width="0.9"/><ellipse cx="67.500" cy="177.300" rx="7.500" ry="4.600" fill="url(#grect)" stroke="#333" stroke-width="1.1"/><path d="M65.800 177.300 H69.200 M67.500 175.600 V179" stroke="#222" stroke-width="1"/><rect x="66.2" y="171.39999999999998" width="2.6" height="2.6" fill="#fff" stroke="#333" stroke-width="0.9"/><rect x="73.7" y="176.0" width="2.6" height="2.6" fill="#fff" stroke="#333" stroke-width="0.9"/><path d="M99 173 H108 V182 L99 182 Z" fill="url(#hatch)"/><path d="M108.500 178 L104 182.500 L108.500 182.500 Z" fill="#f4f4f4"/><path d="M97.500 169.500 V186.500 M109.500 169.500 V186.500 M95 171.500 H112.500 M95 183.500 H112.500" stroke="#333" stroke-width="1.1"/><path d="M103 186 L111 177.500" stroke="#555" stroke-width="0.8"/></g>
<defs><linearGradient id="gblue" x1="0" y1="0" x2="0" y2="1"><stop offset="0" stop-color="#8cc6ea"/><stop offset="1" stop-color="#d6ecf8"/></linearGradient><linearGradient id="ggray" x1="0" y1="0" x2="0" y2="1"><stop offset="0" stop-color="#8c8c8c"/><stop offset="1" stop-color="#d8d8d8"/></linearGradient></defs><g id="ic-mod"><g fill="#3a3a3a"><path d="M142.4 121.9 l4 5 h-2.700 v4 h-2.600 v-4 h-2.700 z"/><path d="M142.4 150.9 l4 -5 h-2.700 v-4 h-2.600 v4 h-2.700 z"/><path d="M127.9 136.4 l5 -4 v2.700 h4 v2.600 h-4 v2.700 z"/><path d="M156.9 136.4 l-5 -4 v2.700 h-4 v2.600 h4 v2.700 z"/></g><rect x="139.4" y="133.4" width="6" height="6" fill="#fff" stroke="#3a3a3a" stroke-width="1.1"/><rect x="167.5" y="119.5" width="23" height="21" fill="url(#gb)" stroke="#d6d6d6"/><rect x="190.5" y="119.5" width="23" height="21" fill="url(#gb)" stroke="#d6d6d6"/><rect x="213.5" y="119.5" width="23" height="21" fill="url(#gb)" stroke="#d6d6d6"/><rect x="241.5" y="119.5" width="31" height="21" fill="url(#gb)" stroke="#d6d6d6"/><path d="M262.5 120 V140" stroke="#d6d6d6"/><path d="M264.90000000000003 128.5 L270.3 128.5 L267.6 131.7 Z" fill="#333"/><rect x="167.5" y="143.5" width="23" height="21" fill="url(#gb)" stroke="#d6d6d6"/><rect x="190.5" y="143.5" width="23" height="21" fill="url(#gb)" stroke="#d6d6d6"/><rect x="213.5" y="143.5" width="23" height="21" fill="url(#gb)" stroke="#d6d6d6"/><rect x="241.5" y="143.5" width="31" height="21" fill="url(#gb)" stroke="#d6d6d6"/><path d="M262.5 144 V164" stroke="#d6d6d6"/><path d="M264.90000000000003 152.5 L270.3 152.5 L267.6 155.7 Z" fill="#333"/><rect x="167.5" y="167.5" width="23" height="21" fill="url(#gb)" stroke="#d6d6d6"/><rect x="190.5" y="167.5" width="23" height="21" fill="url(#gb)" stroke="#d6d6d6"/><rect x="213.5" y="167.5" width="23" height="21" fill="url(#gb)" stroke="#d6d6d6"/><rect x="241.5" y="167.5" width="31" height="21" fill="url(#gb)" stroke="#d6d6d6"/><path d="M262.5 168 V188" stroke="#d6d6d6"/><path d="M264.90000000000003 176.5 L270.3 176.5 L267.6 179.7 Z" fill="#333"/><circle cx="174.300" cy="125.600" r="2.700" fill="#fff" stroke="#333" stroke-width="1"/><path d="M179 123.600 C183 122.800 184.600 124 184.600 126.500" fill="none" stroke="#222" stroke-width="1.1"/><path d="M182.600 126 L186.600 126 L184.600 128.600 Z" fill="#222"/><rect x="176.500" y="128.500" width="8" height="7" fill="#b8b8b8" opacity="0.8"/><circle cx="180.600" cy="131.800" r="3.300" fill="#bfe0f5" stroke="#1b72cf" stroke-width="1.2"/><circle cx="183.800" cy="134.300" r="3" fill="#cfe8f8" fill-opacity="0.8" stroke="#1b72cf" stroke-width="1.2"/><path d="M196.500 124.700 A6.800 6.800 0 1 0 202.500 123.700" fill="none" stroke="#444" stroke-width="1.4"/><path d="M198 121 L203 123.800 L198 126.500 Z" fill="#333"/><path d="M225 122.500 H218.500 V136.500 H225" fill="#f1f1f1" stroke="#222" stroke-width="1.1"/><path d="M225.500 122.500 H228 L232.500 136.800 H225.500 Z" fill="url(#gblue)" stroke="#1b72cf" stroke-width="1.1"/><path d="M221 133 H226" stroke="#111" stroke-width="1.2"/><path d="M225 130.800 L228 133 L225 135.200 Z" fill="#111"/><rect x="243.500" y="122.500" width="10" height="7" fill="#fafafa" stroke="#333"/><rect x="248.500" y="130.500" width="10" height="6.500" fill="#fafafa" stroke="#333"/><rect x="246.500" y="126.500" width="9" height="6.500" fill="url(#ggray)" stroke="#333"/><rect x="172.500" y="146.500" width="14" height="14.500" fill="url(#gblue)" stroke="#1b72cf" stroke-width="1.2"/><rect x="172.500" y="154" width="7" height="7" fill="url(#grect)" stroke="#333" stroke-width="1.1"/><path d="M194.500 156.500 C192 153 195 150.500 197.500 151.500 C196 147 203 145.500 204.500 150 L204.500 154.500 L208.500 154.500 L208.500 160.500 L199 160.500 C196.500 160.500 195.500 159 194.500 156.500 Z" fill="#fafafa" stroke="#222" stroke-width="1.2"/><path d="M198 157.500 L208.500 157.500" stroke="#1b72cf" stroke-width="1.2"/><path d="M199.500 152.500 C199.500 149 202 149.500 202 152.500 V157" fill="none" stroke="#1b72cf" stroke-width="0.9"/><path d="M222.500 147.500 V159.500 H218 Z" fill="#eee" stroke="#333" stroke-width="1"/><path d="M224.500 145.500 V162" stroke="#111" stroke-width="1.1"/><path d="M226.500 147.500 V159.500 H231 Z" fill="#9fd0ee" stroke="#1b72cf" stroke-width="1"/><path d="M243 153.300 H248.500" stroke="#1b72cf" stroke-width="1.3"/><path d="M246.300 160 L252 147" stroke="#1b72cf" stroke-width="1.3"/><path d="M251 153.300 H259" stroke="#1b72cf" stroke-width="1.3" stroke-dasharray="1.6 1.2"/><path d="M185 170.500 L187.300 172.500 L178.500 183 L175.500 181.500 Z" fill="#d9a87c" stroke="#6b4a2a" stroke-width="0.6"/><path d="M178.800 178.600 L181 180.300 L178.500 183 L175.500 181.500 Z" fill="#eee" stroke="#777" stroke-width="0.5"/><path d="M175.500 181.500 L178.500 183 L176.500 184.800 L174.300 184.300 Z" fill="#d81e1e"/><path d="M171 185.700 H174.500 M177.500 185.700 H186.500" stroke="#222" stroke-width="1.1"/><g fill="#cfe8f8" stroke="#1b72cf" stroke-width="1.2" stroke-linejoin="round"><path d="M197 176.500 L201 172.500 H208.500 L205 176.500 Z"/><path d="M197 176.500 H205 V184.500 H197 Z"/><path d="M205 176.500 L208.500 172.500 V180.500 L205 184.500 Z"/><path d="M194 179 L197 176.500 V184.500 L194 185 Z"/><path d="M208.500 176 L211 175 V181.500 L208.500 182.500"/></g><rect x="218.500" y="171.500" width="5" height="5" fill="#fafafa" stroke="#333" stroke-width="1.1"/><rect x="227.500" y="171.500" width="5" height="5" fill="#cfe8f8" stroke="#1b72cf" stroke-width="1.2"/><rect x="218.500" y="180.500" width="5" height="5" fill="#cfe8f8" stroke="#1b72cf" stroke-width="1.2"/><rect x="227.500" y="180.500" width="5" height="5" fill="#cfe8f8" stroke="#1b72cf" stroke-width="1.2"/><path d="M243.500 184.500 V182 C243.500 175 247 170.500 252.500 170.500 H258.500 V184.500 Z" fill="url(#grect)" stroke="#222" stroke-width="1.2"/><path d="M243.500 184.500 V180.500 M252.500 170.500 H255" stroke="#1b72cf" stroke-width="1.2" stroke-dasharray="1.500 1"/></g>
<g id="ic-big"><path d="M298.800 129.8 L312.200 129.5 L305 137 L291 137.3 Z" fill="#fafafa" stroke="#3a4a4a" stroke-width="0.9"/><path d="M298.800 125.3 L312.200 125.0 L305 132.5 L291 132.8 Z" fill="#ececec" stroke="#3a4a4a" stroke-width="0.9"/><path d="M298.800 120.8 L312.200 120.5 L305 128 L291 128.3 Z" fill="#fdfdfd" stroke="#3a4a4a" stroke-width="0.9"/><rect x="307" y="132" width="12.800" height="17.500" rx="1" fill="#f6f6f6" stroke="#333" stroke-width="1"/><rect x="309.500" y="134.500" width="5" height="5.500" fill="#2a5fb8" stroke="#1a3a7a" stroke-width="0.6"/><rect x="316" y="134.500" width="1.600" height="5.500" fill="#999"/><path d="M310 142.700 H317 M310 146.500 H317" stroke="#333" stroke-width="0.9"/><rect x="310.500" y="141.700" width="2" height="2" fill="#333"/><rect x="314.500" y="145.500" width="2" height="2" fill="#333"/><text x="366.500" y="150" font-family="Liberation Sans, sans-serif" font-size="39.500" text-anchor="middle" fill="#3c3c3c">A</text><path d="M424.500 121.500 H436.500 L441.500 126.500 V142.500 H424.500 Z" fill="url(#gw)" stroke="#444" stroke-width="0.9"/><path d="M436.500 121.500 V126.500 H441.500" fill="#eee" stroke="#444" stroke-width="0.9"/><rect x="413.500" y="130.500" width="19" height="12" fill="url(#grect)" stroke="#333" stroke-width="1"/><circle cx="432" cy="142.700" r="6.300" fill="#f2f2f2" fill-opacity="0.75" stroke="#333" stroke-width="1"/><rect x="412" y="141" width="3" height="3" fill="#fff" stroke="#222" stroke-width="0.9"/><path d="M488.7 134.6 L503.00 134.60 A14.3 14.3 0 0 1 495.85 146.98 Z" fill="#d93a32"/><path d="M488.7 134.6 L495.85 146.98 A14.3 14.3 0 0 1 481.55 146.98 Z" fill="#7a4fb5"/><path d="M488.7 134.6 L481.55 146.98 A14.3 14.3 0 0 1 474.40 134.60 Z" fill="#2e62b8"/><path d="M488.7 134.6 L474.40 134.60 A14.3 14.3 0 0 1 481.55 122.22 Z" fill="#6cc45a"/><path d="M488.7 134.6 L481.55 122.22 A14.3 14.3 0 0 1 495.85 122.22 Z" fill="#f1e77a"/><path d="M488.7 134.6 L495.85 122.22 A14.3 14.3 0 0 1 503.00 134.60 Z" fill="#e69a32"/><circle cx="488.7" cy="134.6" r="14.3" fill="none" stroke="#3a3a3a" stroke-width="1.1"/><ellipse cx="488.7" cy="128.6" rx="11" ry="7" fill="#fff" fill-opacity="0.18"/><path d="M534.500 128.500 V136.500 M563 128.500 V136.500 M535 132.500 H562.500" stroke="#333" stroke-width="1.1"/><path d="M535 132.500 L539 130.300 V134.700 Z M562.500 132.500 L558.500 130.300 V134.700 Z" fill="#333"/><rect x="534.500" y="139.500" width="28.500" height="5.300" fill="#f2c31c" stroke="#c47a00" stroke-width="0.9"/><path d="M537 139.500 v2 M539.500 139.500 v2 M542 139.500 v2 M544.500 139.500 v2 M547 139.500 v2 M549.500 139.500 v2 M552 139.500 v2 M554.500 139.500 v2 M557 139.500 v2 M559.500 139.500 v2" stroke="#9a5c00" stroke-width="0.8"/><defs><linearGradient id="gclip" x1="0" y1="0" x2="1" y2="0"><stop offset="0" stop-color="#8f8577"/><stop offset="1" stop-color="#c9c2b6"/></linearGradient></defs><rect x="599" y="123" width="22.300" height="24.200" rx="1.500" fill="url(#gclip)" stroke="#3a3a3a" stroke-width="1"/><path d="M604 124.500 C604 119.500 616.500 119.500 616.500 124.500 Z" fill="#f4f4f4" stroke="#3a3a3a" stroke-width="0.9"/><path d="M607.500 129.500 H618.500 L624 135 V149 H607.500 Z" fill="url(#gw)" stroke="#3a3a3a" stroke-width="0.9"/><path d="M618.500 129.500 V135 H624" fill="#eee" stroke="#3a3a3a" stroke-width="0.9"/><path d="M302.5 203 L310.1 203 L306.3 207.2 Z" fill="#222"/><path d="M363.5 203 L371.1 203 L367.3 207.2 Z" fill="#222"/><path d="M424.5 203 L432.1 203 L428.3 207.2 Z" fill="#222"/><path d="M485.5 203 L493.1 203 L489.3 207.2 Z" fill="#222"/><path d="M546.5 203 L554.0999999999999 203 L550.3 207.2 Z" fill="#222"/><path d="M607.5 203 L615.0999999999999 203 L611.3 207.2 Z" fill="#222"/><path d="M73.2 200.8 L80.8 200.8 L77 205.0 Z" fill="#333"/><path d="M207.2 200.8 L214.8 200.8 L211 205.0 Z" fill="#333"/><rect x="391.500" y="100.500" width="13" height="8" rx="2" fill="#e8e8e8" stroke="#999" stroke-width="0.6"/><path d="M395 103 L401 103 L398 106.300 Z" fill="#222"/></g>
<!--ICONS-->
</svg>


<div class="btab" style="left:74px;">模型</div>
<div class="btab" style="left:113px;">布局1</div>
<div class="btab" style="left:159px;">布局2</div>
</body>
</html>
